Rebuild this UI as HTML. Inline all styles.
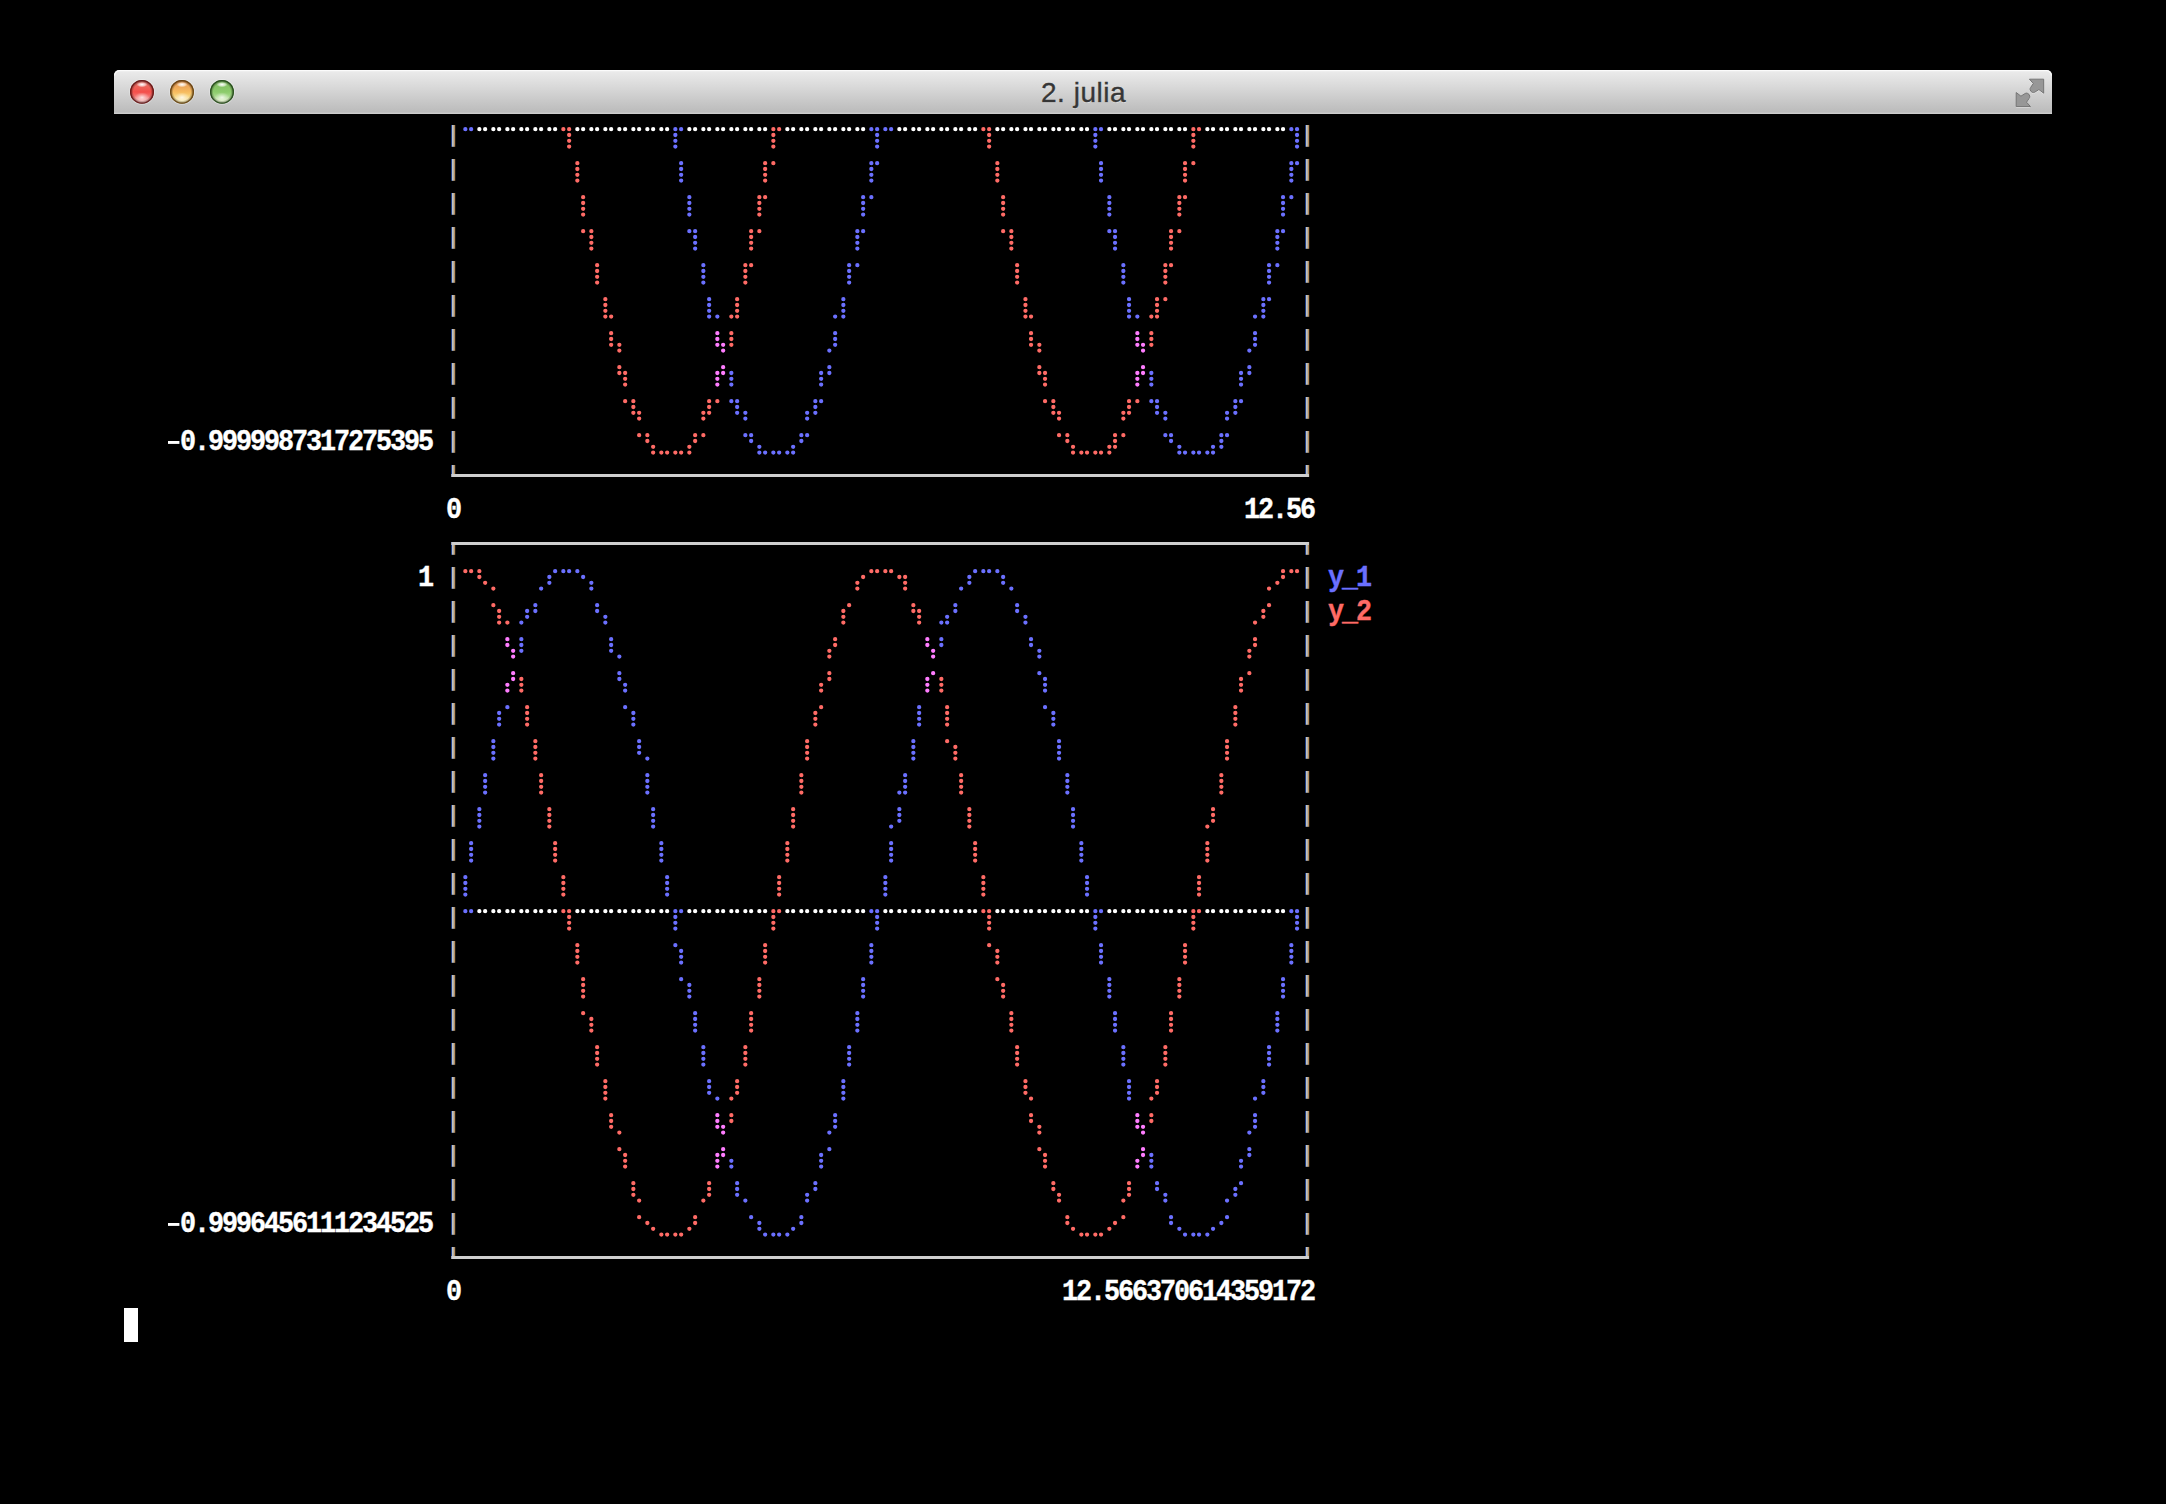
<!DOCTYPE html>
<html><head><meta charset="utf-8"><style>
html,body{margin:0;padding:0;background:#000;width:2166px;height:1504px;overflow:hidden}
svg{position:absolute;left:0;top:0}
.t{font-family:"Liberation Mono",monospace;font-weight:bold;font-size:26.800px;letter-spacing:-2.080px;white-space:pre}
</style></head><body>
<svg width="2166" height="1504" viewBox="0 0 2166 1504">
<defs>
<linearGradient id="tb" x1="0" y1="0" x2="0" y2="1">
<stop offset="0" stop-color="#ececec"/><stop offset="0.5" stop-color="#d3d3d3"/><stop offset="1" stop-color="#b9b9b9"/>
</linearGradient>
<radialGradient id="hl" cx="0.5" cy="0.5" r="0.5"><stop offset="0" stop-color="#fff" stop-opacity="1"/><stop offset="0.6" stop-color="#fff" stop-opacity="0.55"/><stop offset="1" stop-color="#fff" stop-opacity="0"/></radialGradient>
<linearGradient id="bred" x1="0" y1="0" x2="0" y2="1">
<stop offset="0" stop-color="#e27a72"/><stop offset="0.3" stop-color="#ee6259"/><stop offset="0.5" stop-color="#f44f4b"/><stop offset="0.68" stop-color="#f46f6c"/><stop offset="0.88" stop-color="#f4b2b2"/><stop offset="1" stop-color="#f0b4b4"/>
</linearGradient>
<linearGradient id="bora" x1="0" y1="0" x2="0" y2="1">
<stop offset="0" stop-color="#e89a58"/><stop offset="0.3" stop-color="#eea95a"/><stop offset="0.5" stop-color="#f7bb5e"/><stop offset="0.68" stop-color="#f8d47c"/><stop offset="0.88" stop-color="#fbedb8"/><stop offset="1" stop-color="#f3df9a"/>
</linearGradient>
<linearGradient id="bgrn" x1="0" y1="0" x2="0" y2="1">
<stop offset="0" stop-color="#8ac46c"/><stop offset="0.3" stop-color="#86c466"/><stop offset="0.5" stop-color="#8ccc6c"/><stop offset="0.68" stop-color="#a4d888"/><stop offset="0.88" stop-color="#dcefc4"/><stop offset="1" stop-color="#c6e2ac"/>
</linearGradient>
</defs>
<path d="M114 114V75a5 5 0 0 1 5-5H2047a5 5 0 0 1 5 5V114Z" fill="url(#tb)"/>
<path d="M114.6 75.6a5 5 0 0 1 5-5H2046.4a5 5 0 0 1 5 5" fill="none" stroke="#fbfbfb" stroke-width="1.1"/>
<rect x="114" y="112.6" width="1938" height="1.4" fill="#cdcdcd"/>
<defs>
<radialGradient id="vr" cx="0.5" cy="0.5" r="0.5"><stop offset="0" stop-color="#000" stop-opacity="0"/><stop offset="0.72" stop-color="#000" stop-opacity="0"/><stop offset="0.9" stop-color="#000" stop-opacity="0.35"/><stop offset="1" stop-color="#000" stop-opacity="0.6"/></radialGradient>
<radialGradient id="glow" cx="0.5" cy="0.5" r="0.5"><stop offset="0" stop-color="#fff" stop-opacity="0.75"/><stop offset="0.5" stop-color="#fff" stop-opacity="0.35"/><stop offset="1" stop-color="#fff" stop-opacity="0"/></radialGradient>
</defs>
<circle cx="142" cy="91.9" r="12.8" fill="#f4f6f6" fill-opacity="0.45"/>
<circle cx="142" cy="91.9" r="11.9" fill="url(#bred)"/>
<ellipse cx="142" cy="97.4" rx="7.5" ry="5" fill="url(#glow)"/>
<circle cx="142" cy="91.9" r="11.9" fill="url(#vr)"/>
<circle cx="142" cy="91.9" r="11.3" fill="none" stroke="#6a1010" stroke-width="1.3" stroke-opacity="0.75"/>
<ellipse cx="142" cy="84.6" rx="5.5" ry="2.6" fill="url(#hl)"/>
<circle cx="182" cy="91.9" r="12.8" fill="#f4f6f6" fill-opacity="0.45"/>
<circle cx="182" cy="91.9" r="11.9" fill="url(#bora)"/>
<ellipse cx="182" cy="97.4" rx="7.5" ry="5" fill="url(#glow)"/>
<circle cx="182" cy="91.9" r="11.9" fill="url(#vr)"/>
<circle cx="182" cy="91.9" r="11.3" fill="none" stroke="#6a4008" stroke-width="1.3" stroke-opacity="0.75"/>
<ellipse cx="182" cy="84.6" rx="5.5" ry="2.6" fill="url(#hl)"/>
<circle cx="222" cy="91.9" r="12.8" fill="#f4f6f6" fill-opacity="0.45"/>
<circle cx="222" cy="91.9" r="11.9" fill="url(#bgrn)"/>
<ellipse cx="222" cy="97.4" rx="7.5" ry="5" fill="url(#glow)"/>
<circle cx="222" cy="91.9" r="11.9" fill="url(#vr)"/>
<circle cx="222" cy="91.9" r="11.3" fill="none" stroke="#1e4a14" stroke-width="1.3" stroke-opacity="0.75"/>
<ellipse cx="222" cy="84.6" rx="5.5" ry="2.6" fill="url(#hl)"/>
<text x="1083.5" y="102.5" text-anchor="middle" font-family="Liberation Sans, sans-serif" font-size="28" letter-spacing="0.5" fill="#ffffff" fill-opacity="0.5">2. julia</text>
<text x="1083.5" y="101.5" text-anchor="middle" font-family="Liberation Sans, sans-serif" font-size="28" letter-spacing="0.5" fill="#363636" stroke="#363636" stroke-width="0.35">2. julia</text>
<g fill="#f4f4f4" fill-opacity="0.6" transform="translate(0 1.2)"><path d="M2029.42 79.17L2043.67 79.17L2043.67 93.19L2038.92 89.57L2034.62 92.29Q2033.6 92.8 2032.6 92.5Q2030.5 91.8 2030.1 89.6Q2029.9 88.4 2030.7 87.4L2033.27 83.47Z"/><path d="M2029.42 79.17L2043.67 79.17L2043.67 93.19L2038.92 89.57L2034.62 92.29Q2033.6 92.8 2032.6 92.5Q2030.5 91.8 2030.1 89.6Q2029.9 88.4 2030.7 87.4L2033.27 83.47Z" transform="rotate(180 2029.93 92.86)"/></g>
<g fill="#979797" stroke="#6e6e6e" stroke-width="0.9"><path d="M2029.42 79.17L2043.67 79.17L2043.67 93.19L2038.92 89.57L2034.62 92.29Q2033.6 92.8 2032.6 92.5Q2030.5 91.8 2030.1 89.6Q2029.9 88.4 2030.7 87.4L2033.27 83.47Z"/><path d="M2029.42 79.17L2043.67 79.17L2043.67 93.19L2038.92 89.57L2034.62 92.29Q2033.6 92.8 2032.6 92.5Q2030.5 91.8 2030.1 89.6Q2029.9 88.4 2030.7 87.4L2033.27 83.47Z" transform="rotate(180 2029.93 92.86)"/></g>
<path fill="#ffffff" d="M477.2 129.2a2.15 2.15 0 1 0 4.30 0a2.15 2.15 0 1 0 -4.30 0M483.0 129.2a2.15 2.15 0 1 0 4.30 0a2.15 2.15 0 1 0 -4.30 0M491.2 129.2a2.15 2.15 0 1 0 4.30 0a2.15 2.15 0 1 0 -4.30 0M497.0 129.2a2.15 2.15 0 1 0 4.30 0a2.15 2.15 0 1 0 -4.30 0M505.2 129.2a2.15 2.15 0 1 0 4.30 0a2.15 2.15 0 1 0 -4.30 0M511.0 129.2a2.15 2.15 0 1 0 4.30 0a2.15 2.15 0 1 0 -4.30 0M519.2 129.2a2.15 2.15 0 1 0 4.30 0a2.15 2.15 0 1 0 -4.30 0M525.0 129.2a2.15 2.15 0 1 0 4.30 0a2.15 2.15 0 1 0 -4.30 0M533.2 129.2a2.15 2.15 0 1 0 4.30 0a2.15 2.15 0 1 0 -4.30 0M539.0 129.2a2.15 2.15 0 1 0 4.30 0a2.15 2.15 0 1 0 -4.30 0M547.2 129.2a2.15 2.15 0 1 0 4.30 0a2.15 2.15 0 1 0 -4.30 0M553.0 129.2a2.15 2.15 0 1 0 4.30 0a2.15 2.15 0 1 0 -4.30 0M575.2 129.2a2.15 2.15 0 1 0 4.30 0a2.15 2.15 0 1 0 -4.30 0M581.0 129.2a2.15 2.15 0 1 0 4.30 0a2.15 2.15 0 1 0 -4.30 0M589.2 129.2a2.15 2.15 0 1 0 4.30 0a2.15 2.15 0 1 0 -4.30 0M595.0 129.2a2.15 2.15 0 1 0 4.30 0a2.15 2.15 0 1 0 -4.30 0M603.2 129.2a2.15 2.15 0 1 0 4.30 0a2.15 2.15 0 1 0 -4.30 0M609.0 129.2a2.15 2.15 0 1 0 4.30 0a2.15 2.15 0 1 0 -4.30 0M617.2 129.2a2.15 2.15 0 1 0 4.30 0a2.15 2.15 0 1 0 -4.30 0M623.0 129.2a2.15 2.15 0 1 0 4.30 0a2.15 2.15 0 1 0 -4.30 0M631.2 129.2a2.15 2.15 0 1 0 4.30 0a2.15 2.15 0 1 0 -4.30 0M637.0 129.2a2.15 2.15 0 1 0 4.30 0a2.15 2.15 0 1 0 -4.30 0M645.2 129.2a2.15 2.15 0 1 0 4.30 0a2.15 2.15 0 1 0 -4.30 0M651.0 129.2a2.15 2.15 0 1 0 4.30 0a2.15 2.15 0 1 0 -4.30 0M659.2 129.2a2.15 2.15 0 1 0 4.30 0a2.15 2.15 0 1 0 -4.30 0M665.0 129.2a2.15 2.15 0 1 0 4.30 0a2.15 2.15 0 1 0 -4.30 0M687.2 129.2a2.15 2.15 0 1 0 4.30 0a2.15 2.15 0 1 0 -4.30 0M693.0 129.2a2.15 2.15 0 1 0 4.30 0a2.15 2.15 0 1 0 -4.30 0M701.2 129.2a2.15 2.15 0 1 0 4.30 0a2.15 2.15 0 1 0 -4.30 0M707.0 129.2a2.15 2.15 0 1 0 4.30 0a2.15 2.15 0 1 0 -4.30 0M715.2 129.2a2.15 2.15 0 1 0 4.30 0a2.15 2.15 0 1 0 -4.30 0M721.0 129.2a2.15 2.15 0 1 0 4.30 0a2.15 2.15 0 1 0 -4.30 0M729.2 129.2a2.15 2.15 0 1 0 4.30 0a2.15 2.15 0 1 0 -4.30 0M735.0 129.2a2.15 2.15 0 1 0 4.30 0a2.15 2.15 0 1 0 -4.30 0M743.2 129.2a2.15 2.15 0 1 0 4.30 0a2.15 2.15 0 1 0 -4.30 0M749.0 129.2a2.15 2.15 0 1 0 4.30 0a2.15 2.15 0 1 0 -4.30 0M757.2 129.2a2.15 2.15 0 1 0 4.30 0a2.15 2.15 0 1 0 -4.30 0M763.0 129.2a2.15 2.15 0 1 0 4.30 0a2.15 2.15 0 1 0 -4.30 0M785.2 129.2a2.15 2.15 0 1 0 4.30 0a2.15 2.15 0 1 0 -4.30 0M791.0 129.2a2.15 2.15 0 1 0 4.30 0a2.15 2.15 0 1 0 -4.30 0M799.2 129.2a2.15 2.15 0 1 0 4.30 0a2.15 2.15 0 1 0 -4.30 0M805.0 129.2a2.15 2.15 0 1 0 4.30 0a2.15 2.15 0 1 0 -4.30 0M813.2 129.2a2.15 2.15 0 1 0 4.30 0a2.15 2.15 0 1 0 -4.30 0M819.0 129.2a2.15 2.15 0 1 0 4.30 0a2.15 2.15 0 1 0 -4.30 0M827.2 129.2a2.15 2.15 0 1 0 4.30 0a2.15 2.15 0 1 0 -4.30 0M833.0 129.2a2.15 2.15 0 1 0 4.30 0a2.15 2.15 0 1 0 -4.30 0M841.2 129.2a2.15 2.15 0 1 0 4.30 0a2.15 2.15 0 1 0 -4.30 0M847.0 129.2a2.15 2.15 0 1 0 4.30 0a2.15 2.15 0 1 0 -4.30 0M855.2 129.2a2.15 2.15 0 1 0 4.30 0a2.15 2.15 0 1 0 -4.30 0M861.0 129.2a2.15 2.15 0 1 0 4.30 0a2.15 2.15 0 1 0 -4.30 0M897.2 129.2a2.15 2.15 0 1 0 4.30 0a2.15 2.15 0 1 0 -4.30 0M903.0 129.2a2.15 2.15 0 1 0 4.30 0a2.15 2.15 0 1 0 -4.30 0M911.2 129.2a2.15 2.15 0 1 0 4.30 0a2.15 2.15 0 1 0 -4.30 0M917.0 129.2a2.15 2.15 0 1 0 4.30 0a2.15 2.15 0 1 0 -4.30 0M925.2 129.2a2.15 2.15 0 1 0 4.30 0a2.15 2.15 0 1 0 -4.30 0M931.0 129.2a2.15 2.15 0 1 0 4.30 0a2.15 2.15 0 1 0 -4.30 0M939.2 129.2a2.15 2.15 0 1 0 4.30 0a2.15 2.15 0 1 0 -4.30 0M945.0 129.2a2.15 2.15 0 1 0 4.30 0a2.15 2.15 0 1 0 -4.30 0M953.2 129.2a2.15 2.15 0 1 0 4.30 0a2.15 2.15 0 1 0 -4.30 0M959.0 129.2a2.15 2.15 0 1 0 4.30 0a2.15 2.15 0 1 0 -4.30 0M967.2 129.2a2.15 2.15 0 1 0 4.30 0a2.15 2.15 0 1 0 -4.30 0M973.0 129.2a2.15 2.15 0 1 0 4.30 0a2.15 2.15 0 1 0 -4.30 0M995.2 129.2a2.15 2.15 0 1 0 4.30 0a2.15 2.15 0 1 0 -4.30 0M1001.0 129.2a2.15 2.15 0 1 0 4.30 0a2.15 2.15 0 1 0 -4.30 0M1009.2 129.2a2.15 2.15 0 1 0 4.30 0a2.15 2.15 0 1 0 -4.30 0M1015.0 129.2a2.15 2.15 0 1 0 4.30 0a2.15 2.15 0 1 0 -4.30 0M1023.3 129.2a2.15 2.15 0 1 0 4.30 0a2.15 2.15 0 1 0 -4.30 0M1028.9 129.2a2.15 2.15 0 1 0 4.30 0a2.15 2.15 0 1 0 -4.30 0M1037.2 129.2a2.15 2.15 0 1 0 4.30 0a2.15 2.15 0 1 0 -4.30 0M1042.9 129.2a2.15 2.15 0 1 0 4.30 0a2.15 2.15 0 1 0 -4.30 0M1051.2 129.2a2.15 2.15 0 1 0 4.30 0a2.15 2.15 0 1 0 -4.30 0M1056.9 129.2a2.15 2.15 0 1 0 4.30 0a2.15 2.15 0 1 0 -4.30 0M1065.2 129.2a2.15 2.15 0 1 0 4.30 0a2.15 2.15 0 1 0 -4.30 0M1070.9 129.2a2.15 2.15 0 1 0 4.30 0a2.15 2.15 0 1 0 -4.30 0M1079.2 129.2a2.15 2.15 0 1 0 4.30 0a2.15 2.15 0 1 0 -4.30 0M1084.9 129.2a2.15 2.15 0 1 0 4.30 0a2.15 2.15 0 1 0 -4.30 0M1107.2 129.2a2.15 2.15 0 1 0 4.30 0a2.15 2.15 0 1 0 -4.30 0M1112.9 129.2a2.15 2.15 0 1 0 4.30 0a2.15 2.15 0 1 0 -4.30 0M1121.2 129.2a2.15 2.15 0 1 0 4.30 0a2.15 2.15 0 1 0 -4.30 0M1126.9 129.2a2.15 2.15 0 1 0 4.30 0a2.15 2.15 0 1 0 -4.30 0M1135.2 129.2a2.15 2.15 0 1 0 4.30 0a2.15 2.15 0 1 0 -4.30 0M1140.9 129.2a2.15 2.15 0 1 0 4.30 0a2.15 2.15 0 1 0 -4.30 0M1149.2 129.2a2.15 2.15 0 1 0 4.30 0a2.15 2.15 0 1 0 -4.30 0M1154.9 129.2a2.15 2.15 0 1 0 4.30 0a2.15 2.15 0 1 0 -4.30 0M1163.2 129.2a2.15 2.15 0 1 0 4.30 0a2.15 2.15 0 1 0 -4.30 0M1168.9 129.2a2.15 2.15 0 1 0 4.30 0a2.15 2.15 0 1 0 -4.30 0M1177.2 129.2a2.15 2.15 0 1 0 4.30 0a2.15 2.15 0 1 0 -4.30 0M1182.9 129.2a2.15 2.15 0 1 0 4.30 0a2.15 2.15 0 1 0 -4.30 0M1205.2 129.2a2.15 2.15 0 1 0 4.30 0a2.15 2.15 0 1 0 -4.30 0M1210.9 129.2a2.15 2.15 0 1 0 4.30 0a2.15 2.15 0 1 0 -4.30 0M1219.2 129.2a2.15 2.15 0 1 0 4.30 0a2.15 2.15 0 1 0 -4.30 0M1224.9 129.2a2.15 2.15 0 1 0 4.30 0a2.15 2.15 0 1 0 -4.30 0M1233.2 129.2a2.15 2.15 0 1 0 4.30 0a2.15 2.15 0 1 0 -4.30 0M1238.9 129.2a2.15 2.15 0 1 0 4.30 0a2.15 2.15 0 1 0 -4.30 0M1247.2 129.2a2.15 2.15 0 1 0 4.30 0a2.15 2.15 0 1 0 -4.30 0M1252.9 129.2a2.15 2.15 0 1 0 4.30 0a2.15 2.15 0 1 0 -4.30 0M1261.2 129.2a2.15 2.15 0 1 0 4.30 0a2.15 2.15 0 1 0 -4.30 0M1266.9 129.2a2.15 2.15 0 1 0 4.30 0a2.15 2.15 0 1 0 -4.30 0M1275.2 129.2a2.15 2.15 0 1 0 4.30 0a2.15 2.15 0 1 0 -4.30 0M1280.9 129.2a2.15 2.15 0 1 0 4.30 0a2.15 2.15 0 1 0 -4.30 0M477.2 911.2a2.15 2.15 0 1 0 4.30 0a2.15 2.15 0 1 0 -4.30 0M483.0 911.2a2.15 2.15 0 1 0 4.30 0a2.15 2.15 0 1 0 -4.30 0M491.2 911.2a2.15 2.15 0 1 0 4.30 0a2.15 2.15 0 1 0 -4.30 0M497.0 911.2a2.15 2.15 0 1 0 4.30 0a2.15 2.15 0 1 0 -4.30 0M505.2 911.2a2.15 2.15 0 1 0 4.30 0a2.15 2.15 0 1 0 -4.30 0M511.0 911.2a2.15 2.15 0 1 0 4.30 0a2.15 2.15 0 1 0 -4.30 0M519.2 911.2a2.15 2.15 0 1 0 4.30 0a2.15 2.15 0 1 0 -4.30 0M525.0 911.2a2.15 2.15 0 1 0 4.30 0a2.15 2.15 0 1 0 -4.30 0M533.2 911.2a2.15 2.15 0 1 0 4.30 0a2.15 2.15 0 1 0 -4.30 0M539.0 911.2a2.15 2.15 0 1 0 4.30 0a2.15 2.15 0 1 0 -4.30 0M547.2 911.2a2.15 2.15 0 1 0 4.30 0a2.15 2.15 0 1 0 -4.30 0M553.0 911.2a2.15 2.15 0 1 0 4.30 0a2.15 2.15 0 1 0 -4.30 0M575.2 911.2a2.15 2.15 0 1 0 4.30 0a2.15 2.15 0 1 0 -4.30 0M581.0 911.2a2.15 2.15 0 1 0 4.30 0a2.15 2.15 0 1 0 -4.30 0M589.2 911.2a2.15 2.15 0 1 0 4.30 0a2.15 2.15 0 1 0 -4.30 0M595.0 911.2a2.15 2.15 0 1 0 4.30 0a2.15 2.15 0 1 0 -4.30 0M603.2 911.2a2.15 2.15 0 1 0 4.30 0a2.15 2.15 0 1 0 -4.30 0M609.0 911.2a2.15 2.15 0 1 0 4.30 0a2.15 2.15 0 1 0 -4.30 0M617.2 911.2a2.15 2.15 0 1 0 4.30 0a2.15 2.15 0 1 0 -4.30 0M623.0 911.2a2.15 2.15 0 1 0 4.30 0a2.15 2.15 0 1 0 -4.30 0M631.2 911.2a2.15 2.15 0 1 0 4.30 0a2.15 2.15 0 1 0 -4.30 0M637.0 911.2a2.15 2.15 0 1 0 4.30 0a2.15 2.15 0 1 0 -4.30 0M645.2 911.2a2.15 2.15 0 1 0 4.30 0a2.15 2.15 0 1 0 -4.30 0M651.0 911.2a2.15 2.15 0 1 0 4.30 0a2.15 2.15 0 1 0 -4.30 0M659.2 911.2a2.15 2.15 0 1 0 4.30 0a2.15 2.15 0 1 0 -4.30 0M665.0 911.2a2.15 2.15 0 1 0 4.30 0a2.15 2.15 0 1 0 -4.30 0M687.2 911.2a2.15 2.15 0 1 0 4.30 0a2.15 2.15 0 1 0 -4.30 0M693.0 911.2a2.15 2.15 0 1 0 4.30 0a2.15 2.15 0 1 0 -4.30 0M701.2 911.2a2.15 2.15 0 1 0 4.30 0a2.15 2.15 0 1 0 -4.30 0M707.0 911.2a2.15 2.15 0 1 0 4.30 0a2.15 2.15 0 1 0 -4.30 0M715.2 911.2a2.15 2.15 0 1 0 4.30 0a2.15 2.15 0 1 0 -4.30 0M721.0 911.2a2.15 2.15 0 1 0 4.30 0a2.15 2.15 0 1 0 -4.30 0M729.2 911.2a2.15 2.15 0 1 0 4.30 0a2.15 2.15 0 1 0 -4.30 0M735.0 911.2a2.15 2.15 0 1 0 4.30 0a2.15 2.15 0 1 0 -4.30 0M743.2 911.2a2.15 2.15 0 1 0 4.30 0a2.15 2.15 0 1 0 -4.30 0M749.0 911.2a2.15 2.15 0 1 0 4.30 0a2.15 2.15 0 1 0 -4.30 0M757.2 911.2a2.15 2.15 0 1 0 4.30 0a2.15 2.15 0 1 0 -4.30 0M763.0 911.2a2.15 2.15 0 1 0 4.30 0a2.15 2.15 0 1 0 -4.30 0M785.2 911.2a2.15 2.15 0 1 0 4.30 0a2.15 2.15 0 1 0 -4.30 0M791.0 911.2a2.15 2.15 0 1 0 4.30 0a2.15 2.15 0 1 0 -4.30 0M799.2 911.2a2.15 2.15 0 1 0 4.30 0a2.15 2.15 0 1 0 -4.30 0M805.0 911.2a2.15 2.15 0 1 0 4.30 0a2.15 2.15 0 1 0 -4.30 0M813.2 911.2a2.15 2.15 0 1 0 4.30 0a2.15 2.15 0 1 0 -4.30 0M819.0 911.2a2.15 2.15 0 1 0 4.30 0a2.15 2.15 0 1 0 -4.30 0M827.2 911.2a2.15 2.15 0 1 0 4.30 0a2.15 2.15 0 1 0 -4.30 0M833.0 911.2a2.15 2.15 0 1 0 4.30 0a2.15 2.15 0 1 0 -4.30 0M841.2 911.2a2.15 2.15 0 1 0 4.30 0a2.15 2.15 0 1 0 -4.30 0M847.0 911.2a2.15 2.15 0 1 0 4.30 0a2.15 2.15 0 1 0 -4.30 0M855.2 911.2a2.15 2.15 0 1 0 4.30 0a2.15 2.15 0 1 0 -4.30 0M861.0 911.2a2.15 2.15 0 1 0 4.30 0a2.15 2.15 0 1 0 -4.30 0M883.2 911.2a2.15 2.15 0 1 0 4.30 0a2.15 2.15 0 1 0 -4.30 0M889.0 911.2a2.15 2.15 0 1 0 4.30 0a2.15 2.15 0 1 0 -4.30 0M897.2 911.2a2.15 2.15 0 1 0 4.30 0a2.15 2.15 0 1 0 -4.30 0M903.0 911.2a2.15 2.15 0 1 0 4.30 0a2.15 2.15 0 1 0 -4.30 0M911.2 911.2a2.15 2.15 0 1 0 4.30 0a2.15 2.15 0 1 0 -4.30 0M917.0 911.2a2.15 2.15 0 1 0 4.30 0a2.15 2.15 0 1 0 -4.30 0M925.2 911.2a2.15 2.15 0 1 0 4.30 0a2.15 2.15 0 1 0 -4.30 0M931.0 911.2a2.15 2.15 0 1 0 4.30 0a2.15 2.15 0 1 0 -4.30 0M939.2 911.2a2.15 2.15 0 1 0 4.30 0a2.15 2.15 0 1 0 -4.30 0M945.0 911.2a2.15 2.15 0 1 0 4.30 0a2.15 2.15 0 1 0 -4.30 0M953.2 911.2a2.15 2.15 0 1 0 4.30 0a2.15 2.15 0 1 0 -4.30 0M959.0 911.2a2.15 2.15 0 1 0 4.30 0a2.15 2.15 0 1 0 -4.30 0M967.2 911.2a2.15 2.15 0 1 0 4.30 0a2.15 2.15 0 1 0 -4.30 0M973.0 911.2a2.15 2.15 0 1 0 4.30 0a2.15 2.15 0 1 0 -4.30 0M995.2 911.2a2.15 2.15 0 1 0 4.30 0a2.15 2.15 0 1 0 -4.30 0M1001.0 911.2a2.15 2.15 0 1 0 4.30 0a2.15 2.15 0 1 0 -4.30 0M1009.2 911.2a2.15 2.15 0 1 0 4.30 0a2.15 2.15 0 1 0 -4.30 0M1015.0 911.2a2.15 2.15 0 1 0 4.30 0a2.15 2.15 0 1 0 -4.30 0M1023.3 911.2a2.15 2.15 0 1 0 4.30 0a2.15 2.15 0 1 0 -4.30 0M1028.9 911.2a2.15 2.15 0 1 0 4.30 0a2.15 2.15 0 1 0 -4.30 0M1037.2 911.2a2.15 2.15 0 1 0 4.30 0a2.15 2.15 0 1 0 -4.30 0M1042.9 911.2a2.15 2.15 0 1 0 4.30 0a2.15 2.15 0 1 0 -4.30 0M1051.2 911.2a2.15 2.15 0 1 0 4.30 0a2.15 2.15 0 1 0 -4.30 0M1056.9 911.2a2.15 2.15 0 1 0 4.30 0a2.15 2.15 0 1 0 -4.30 0M1065.2 911.2a2.15 2.15 0 1 0 4.30 0a2.15 2.15 0 1 0 -4.30 0M1070.9 911.2a2.15 2.15 0 1 0 4.30 0a2.15 2.15 0 1 0 -4.30 0M1079.2 911.2a2.15 2.15 0 1 0 4.30 0a2.15 2.15 0 1 0 -4.30 0M1084.9 911.2a2.15 2.15 0 1 0 4.30 0a2.15 2.15 0 1 0 -4.30 0M1107.2 911.2a2.15 2.15 0 1 0 4.30 0a2.15 2.15 0 1 0 -4.30 0M1112.9 911.2a2.15 2.15 0 1 0 4.30 0a2.15 2.15 0 1 0 -4.30 0M1121.2 911.2a2.15 2.15 0 1 0 4.30 0a2.15 2.15 0 1 0 -4.30 0M1126.9 911.2a2.15 2.15 0 1 0 4.30 0a2.15 2.15 0 1 0 -4.30 0M1135.2 911.2a2.15 2.15 0 1 0 4.30 0a2.15 2.15 0 1 0 -4.30 0M1140.9 911.2a2.15 2.15 0 1 0 4.30 0a2.15 2.15 0 1 0 -4.30 0M1149.2 911.2a2.15 2.15 0 1 0 4.30 0a2.15 2.15 0 1 0 -4.30 0M1154.9 911.2a2.15 2.15 0 1 0 4.30 0a2.15 2.15 0 1 0 -4.30 0M1163.2 911.2a2.15 2.15 0 1 0 4.30 0a2.15 2.15 0 1 0 -4.30 0M1168.9 911.2a2.15 2.15 0 1 0 4.30 0a2.15 2.15 0 1 0 -4.30 0M1177.2 911.2a2.15 2.15 0 1 0 4.30 0a2.15 2.15 0 1 0 -4.30 0M1182.9 911.2a2.15 2.15 0 1 0 4.30 0a2.15 2.15 0 1 0 -4.30 0M1205.2 911.2a2.15 2.15 0 1 0 4.30 0a2.15 2.15 0 1 0 -4.30 0M1210.9 911.2a2.15 2.15 0 1 0 4.30 0a2.15 2.15 0 1 0 -4.30 0M1219.2 911.2a2.15 2.15 0 1 0 4.30 0a2.15 2.15 0 1 0 -4.30 0M1224.9 911.2a2.15 2.15 0 1 0 4.30 0a2.15 2.15 0 1 0 -4.30 0M1233.2 911.2a2.15 2.15 0 1 0 4.30 0a2.15 2.15 0 1 0 -4.30 0M1238.9 911.2a2.15 2.15 0 1 0 4.30 0a2.15 2.15 0 1 0 -4.30 0M1247.2 911.2a2.15 2.15 0 1 0 4.30 0a2.15 2.15 0 1 0 -4.30 0M1252.9 911.2a2.15 2.15 0 1 0 4.30 0a2.15 2.15 0 1 0 -4.30 0M1261.2 911.2a2.15 2.15 0 1 0 4.30 0a2.15 2.15 0 1 0 -4.30 0M1266.9 911.2a2.15 2.15 0 1 0 4.30 0a2.15 2.15 0 1 0 -4.30 0M1275.2 911.2a2.15 2.15 0 1 0 4.30 0a2.15 2.15 0 1 0 -4.30 0M1280.9 911.2a2.15 2.15 0 1 0 4.30 0a2.15 2.15 0 1 0 -4.30 0"/>
<path fill="#ff6b66" d="M561.2 129.2a2.15 2.15 0 1 0 4.30 0a2.15 2.15 0 1 0 -4.30 0M567.0 129.2a2.15 2.15 0 1 0 4.30 0a2.15 2.15 0 1 0 -4.30 0M771.2 129.2a2.15 2.15 0 1 0 4.30 0a2.15 2.15 0 1 0 -4.30 0M777.0 129.2a2.15 2.15 0 1 0 4.30 0a2.15 2.15 0 1 0 -4.30 0M981.2 129.2a2.15 2.15 0 1 0 4.30 0a2.15 2.15 0 1 0 -4.30 0M987.0 129.2a2.15 2.15 0 1 0 4.30 0a2.15 2.15 0 1 0 -4.30 0M1191.2 129.2a2.15 2.15 0 1 0 4.30 0a2.15 2.15 0 1 0 -4.30 0M1196.9 129.2a2.15 2.15 0 1 0 4.30 0a2.15 2.15 0 1 0 -4.30 0M567.0 135.0a2.15 2.15 0 1 0 4.30 0a2.15 2.15 0 1 0 -4.30 0M771.2 135.0a2.15 2.15 0 1 0 4.30 0a2.15 2.15 0 1 0 -4.30 0M987.0 135.0a2.15 2.15 0 1 0 4.30 0a2.15 2.15 0 1 0 -4.30 0M1191.2 135.0a2.15 2.15 0 1 0 4.30 0a2.15 2.15 0 1 0 -4.30 0M567.0 140.8a2.15 2.15 0 1 0 4.30 0a2.15 2.15 0 1 0 -4.30 0M771.2 140.8a2.15 2.15 0 1 0 4.30 0a2.15 2.15 0 1 0 -4.30 0M987.0 140.8a2.15 2.15 0 1 0 4.30 0a2.15 2.15 0 1 0 -4.30 0M1191.2 140.8a2.15 2.15 0 1 0 4.30 0a2.15 2.15 0 1 0 -4.30 0M567.0 146.6a2.15 2.15 0 1 0 4.30 0a2.15 2.15 0 1 0 -4.30 0M771.2 146.6a2.15 2.15 0 1 0 4.30 0a2.15 2.15 0 1 0 -4.30 0M987.0 146.6a2.15 2.15 0 1 0 4.30 0a2.15 2.15 0 1 0 -4.30 0M1191.2 146.6a2.15 2.15 0 1 0 4.30 0a2.15 2.15 0 1 0 -4.30 0M575.2 163.2a2.15 2.15 0 1 0 4.30 0a2.15 2.15 0 1 0 -4.30 0M763.0 163.2a2.15 2.15 0 1 0 4.30 0a2.15 2.15 0 1 0 -4.30 0M771.2 163.2a2.15 2.15 0 1 0 4.30 0a2.15 2.15 0 1 0 -4.30 0M995.2 163.2a2.15 2.15 0 1 0 4.30 0a2.15 2.15 0 1 0 -4.30 0M1182.9 163.2a2.15 2.15 0 1 0 4.30 0a2.15 2.15 0 1 0 -4.30 0M1191.2 163.2a2.15 2.15 0 1 0 4.30 0a2.15 2.15 0 1 0 -4.30 0M575.2 169.0a2.15 2.15 0 1 0 4.30 0a2.15 2.15 0 1 0 -4.30 0M763.0 169.0a2.15 2.15 0 1 0 4.30 0a2.15 2.15 0 1 0 -4.30 0M995.2 169.0a2.15 2.15 0 1 0 4.30 0a2.15 2.15 0 1 0 -4.30 0M1182.9 169.0a2.15 2.15 0 1 0 4.30 0a2.15 2.15 0 1 0 -4.30 0M575.2 174.8a2.15 2.15 0 1 0 4.30 0a2.15 2.15 0 1 0 -4.30 0M763.0 174.8a2.15 2.15 0 1 0 4.30 0a2.15 2.15 0 1 0 -4.30 0M995.2 174.8a2.15 2.15 0 1 0 4.30 0a2.15 2.15 0 1 0 -4.30 0M1182.9 174.8a2.15 2.15 0 1 0 4.30 0a2.15 2.15 0 1 0 -4.30 0M575.2 180.6a2.15 2.15 0 1 0 4.30 0a2.15 2.15 0 1 0 -4.30 0M763.0 180.6a2.15 2.15 0 1 0 4.30 0a2.15 2.15 0 1 0 -4.30 0M995.2 180.6a2.15 2.15 0 1 0 4.30 0a2.15 2.15 0 1 0 -4.30 0M1182.9 180.6a2.15 2.15 0 1 0 4.30 0a2.15 2.15 0 1 0 -4.30 0M581.0 197.2a2.15 2.15 0 1 0 4.30 0a2.15 2.15 0 1 0 -4.30 0M757.2 197.2a2.15 2.15 0 1 0 4.30 0a2.15 2.15 0 1 0 -4.30 0M763.0 197.2a2.15 2.15 0 1 0 4.30 0a2.15 2.15 0 1 0 -4.30 0M1001.0 197.2a2.15 2.15 0 1 0 4.30 0a2.15 2.15 0 1 0 -4.30 0M1177.2 197.2a2.15 2.15 0 1 0 4.30 0a2.15 2.15 0 1 0 -4.30 0M1182.9 197.2a2.15 2.15 0 1 0 4.30 0a2.15 2.15 0 1 0 -4.30 0M581.0 203.0a2.15 2.15 0 1 0 4.30 0a2.15 2.15 0 1 0 -4.30 0M757.2 203.0a2.15 2.15 0 1 0 4.30 0a2.15 2.15 0 1 0 -4.30 0M1001.0 203.0a2.15 2.15 0 1 0 4.30 0a2.15 2.15 0 1 0 -4.30 0M1177.2 203.0a2.15 2.15 0 1 0 4.30 0a2.15 2.15 0 1 0 -4.30 0M581.0 208.8a2.15 2.15 0 1 0 4.30 0a2.15 2.15 0 1 0 -4.30 0M757.2 208.8a2.15 2.15 0 1 0 4.30 0a2.15 2.15 0 1 0 -4.30 0M1001.0 208.8a2.15 2.15 0 1 0 4.30 0a2.15 2.15 0 1 0 -4.30 0M1177.2 208.8a2.15 2.15 0 1 0 4.30 0a2.15 2.15 0 1 0 -4.30 0M581.0 214.6a2.15 2.15 0 1 0 4.30 0a2.15 2.15 0 1 0 -4.30 0M757.2 214.6a2.15 2.15 0 1 0 4.30 0a2.15 2.15 0 1 0 -4.30 0M1001.0 214.6a2.15 2.15 0 1 0 4.30 0a2.15 2.15 0 1 0 -4.30 0M1177.2 214.6a2.15 2.15 0 1 0 4.30 0a2.15 2.15 0 1 0 -4.30 0M581.0 231.2a2.15 2.15 0 1 0 4.30 0a2.15 2.15 0 1 0 -4.30 0M589.2 231.2a2.15 2.15 0 1 0 4.30 0a2.15 2.15 0 1 0 -4.30 0M749.0 231.2a2.15 2.15 0 1 0 4.30 0a2.15 2.15 0 1 0 -4.30 0M757.2 231.2a2.15 2.15 0 1 0 4.30 0a2.15 2.15 0 1 0 -4.30 0M1001.0 231.2a2.15 2.15 0 1 0 4.30 0a2.15 2.15 0 1 0 -4.30 0M1009.2 231.2a2.15 2.15 0 1 0 4.30 0a2.15 2.15 0 1 0 -4.30 0M1168.9 231.2a2.15 2.15 0 1 0 4.30 0a2.15 2.15 0 1 0 -4.30 0M1177.2 231.2a2.15 2.15 0 1 0 4.30 0a2.15 2.15 0 1 0 -4.30 0M589.2 237.0a2.15 2.15 0 1 0 4.30 0a2.15 2.15 0 1 0 -4.30 0M749.0 237.0a2.15 2.15 0 1 0 4.30 0a2.15 2.15 0 1 0 -4.30 0M1009.2 237.0a2.15 2.15 0 1 0 4.30 0a2.15 2.15 0 1 0 -4.30 0M1168.9 237.0a2.15 2.15 0 1 0 4.30 0a2.15 2.15 0 1 0 -4.30 0M589.2 242.8a2.15 2.15 0 1 0 4.30 0a2.15 2.15 0 1 0 -4.30 0M749.0 242.8a2.15 2.15 0 1 0 4.30 0a2.15 2.15 0 1 0 -4.30 0M1009.2 242.8a2.15 2.15 0 1 0 4.30 0a2.15 2.15 0 1 0 -4.30 0M1168.9 242.8a2.15 2.15 0 1 0 4.30 0a2.15 2.15 0 1 0 -4.30 0M589.2 248.6a2.15 2.15 0 1 0 4.30 0a2.15 2.15 0 1 0 -4.30 0M749.0 248.6a2.15 2.15 0 1 0 4.30 0a2.15 2.15 0 1 0 -4.30 0M1009.2 248.6a2.15 2.15 0 1 0 4.30 0a2.15 2.15 0 1 0 -4.30 0M1168.9 248.6a2.15 2.15 0 1 0 4.30 0a2.15 2.15 0 1 0 -4.30 0M595.0 265.2a2.15 2.15 0 1 0 4.30 0a2.15 2.15 0 1 0 -4.30 0M743.2 265.2a2.15 2.15 0 1 0 4.30 0a2.15 2.15 0 1 0 -4.30 0M749.0 265.2a2.15 2.15 0 1 0 4.30 0a2.15 2.15 0 1 0 -4.30 0M1015.0 265.2a2.15 2.15 0 1 0 4.30 0a2.15 2.15 0 1 0 -4.30 0M1163.2 265.2a2.15 2.15 0 1 0 4.30 0a2.15 2.15 0 1 0 -4.30 0M1168.9 265.2a2.15 2.15 0 1 0 4.30 0a2.15 2.15 0 1 0 -4.30 0M595.0 271.0a2.15 2.15 0 1 0 4.30 0a2.15 2.15 0 1 0 -4.30 0M743.2 271.0a2.15 2.15 0 1 0 4.30 0a2.15 2.15 0 1 0 -4.30 0M1015.0 271.0a2.15 2.15 0 1 0 4.30 0a2.15 2.15 0 1 0 -4.30 0M1163.2 271.0a2.15 2.15 0 1 0 4.30 0a2.15 2.15 0 1 0 -4.30 0M595.0 276.8a2.15 2.15 0 1 0 4.30 0a2.15 2.15 0 1 0 -4.30 0M743.2 276.8a2.15 2.15 0 1 0 4.30 0a2.15 2.15 0 1 0 -4.30 0M1015.0 276.8a2.15 2.15 0 1 0 4.30 0a2.15 2.15 0 1 0 -4.30 0M1163.2 276.8a2.15 2.15 0 1 0 4.30 0a2.15 2.15 0 1 0 -4.30 0M595.0 282.6a2.15 2.15 0 1 0 4.30 0a2.15 2.15 0 1 0 -4.30 0M743.2 282.6a2.15 2.15 0 1 0 4.30 0a2.15 2.15 0 1 0 -4.30 0M1015.0 282.6a2.15 2.15 0 1 0 4.30 0a2.15 2.15 0 1 0 -4.30 0M1163.2 282.6a2.15 2.15 0 1 0 4.30 0a2.15 2.15 0 1 0 -4.30 0M603.2 299.2a2.15 2.15 0 1 0 4.30 0a2.15 2.15 0 1 0 -4.30 0M735.0 299.2a2.15 2.15 0 1 0 4.30 0a2.15 2.15 0 1 0 -4.30 0M1023.3 299.2a2.15 2.15 0 1 0 4.30 0a2.15 2.15 0 1 0 -4.30 0M1154.9 299.2a2.15 2.15 0 1 0 4.30 0a2.15 2.15 0 1 0 -4.30 0M1163.2 299.2a2.15 2.15 0 1 0 4.30 0a2.15 2.15 0 1 0 -4.30 0M603.2 305.0a2.15 2.15 0 1 0 4.30 0a2.15 2.15 0 1 0 -4.30 0M735.0 305.0a2.15 2.15 0 1 0 4.30 0a2.15 2.15 0 1 0 -4.30 0M1023.3 305.0a2.15 2.15 0 1 0 4.30 0a2.15 2.15 0 1 0 -4.30 0M1154.9 305.0a2.15 2.15 0 1 0 4.30 0a2.15 2.15 0 1 0 -4.30 0M603.2 310.8a2.15 2.15 0 1 0 4.30 0a2.15 2.15 0 1 0 -4.30 0M735.0 310.8a2.15 2.15 0 1 0 4.30 0a2.15 2.15 0 1 0 -4.30 0M1023.3 310.8a2.15 2.15 0 1 0 4.30 0a2.15 2.15 0 1 0 -4.30 0M1154.9 310.8a2.15 2.15 0 1 0 4.30 0a2.15 2.15 0 1 0 -4.30 0M603.2 316.6a2.15 2.15 0 1 0 4.30 0a2.15 2.15 0 1 0 -4.30 0M609.0 316.6a2.15 2.15 0 1 0 4.30 0a2.15 2.15 0 1 0 -4.30 0M729.2 316.6a2.15 2.15 0 1 0 4.30 0a2.15 2.15 0 1 0 -4.30 0M735.0 316.6a2.15 2.15 0 1 0 4.30 0a2.15 2.15 0 1 0 -4.30 0M1023.3 316.6a2.15 2.15 0 1 0 4.30 0a2.15 2.15 0 1 0 -4.30 0M1028.9 316.6a2.15 2.15 0 1 0 4.30 0a2.15 2.15 0 1 0 -4.30 0M1149.2 316.6a2.15 2.15 0 1 0 4.30 0a2.15 2.15 0 1 0 -4.30 0M1154.9 316.6a2.15 2.15 0 1 0 4.30 0a2.15 2.15 0 1 0 -4.30 0M609.0 333.2a2.15 2.15 0 1 0 4.30 0a2.15 2.15 0 1 0 -4.30 0M729.2 333.2a2.15 2.15 0 1 0 4.30 0a2.15 2.15 0 1 0 -4.30 0M1028.9 333.2a2.15 2.15 0 1 0 4.30 0a2.15 2.15 0 1 0 -4.30 0M1149.2 333.2a2.15 2.15 0 1 0 4.30 0a2.15 2.15 0 1 0 -4.30 0M609.0 339.0a2.15 2.15 0 1 0 4.30 0a2.15 2.15 0 1 0 -4.30 0M729.2 339.0a2.15 2.15 0 1 0 4.30 0a2.15 2.15 0 1 0 -4.30 0M1028.9 339.0a2.15 2.15 0 1 0 4.30 0a2.15 2.15 0 1 0 -4.30 0M1149.2 339.0a2.15 2.15 0 1 0 4.30 0a2.15 2.15 0 1 0 -4.30 0M609.0 344.8a2.15 2.15 0 1 0 4.30 0a2.15 2.15 0 1 0 -4.30 0M617.2 344.8a2.15 2.15 0 1 0 4.30 0a2.15 2.15 0 1 0 -4.30 0M729.2 344.8a2.15 2.15 0 1 0 4.30 0a2.15 2.15 0 1 0 -4.30 0M1028.9 344.8a2.15 2.15 0 1 0 4.30 0a2.15 2.15 0 1 0 -4.30 0M1037.2 344.8a2.15 2.15 0 1 0 4.30 0a2.15 2.15 0 1 0 -4.30 0M1149.2 344.8a2.15 2.15 0 1 0 4.30 0a2.15 2.15 0 1 0 -4.30 0M617.2 350.6a2.15 2.15 0 1 0 4.30 0a2.15 2.15 0 1 0 -4.30 0M1037.2 350.6a2.15 2.15 0 1 0 4.30 0a2.15 2.15 0 1 0 -4.30 0M617.2 367.2a2.15 2.15 0 1 0 4.30 0a2.15 2.15 0 1 0 -4.30 0M1037.2 367.2a2.15 2.15 0 1 0 4.30 0a2.15 2.15 0 1 0 -4.30 0M617.2 373.0a2.15 2.15 0 1 0 4.30 0a2.15 2.15 0 1 0 -4.30 0M623.0 373.0a2.15 2.15 0 1 0 4.30 0a2.15 2.15 0 1 0 -4.30 0M1037.2 373.0a2.15 2.15 0 1 0 4.30 0a2.15 2.15 0 1 0 -4.30 0M1042.9 373.0a2.15 2.15 0 1 0 4.30 0a2.15 2.15 0 1 0 -4.30 0M623.0 378.8a2.15 2.15 0 1 0 4.30 0a2.15 2.15 0 1 0 -4.30 0M1042.9 378.8a2.15 2.15 0 1 0 4.30 0a2.15 2.15 0 1 0 -4.30 0M623.0 384.6a2.15 2.15 0 1 0 4.30 0a2.15 2.15 0 1 0 -4.30 0M1042.9 384.6a2.15 2.15 0 1 0 4.30 0a2.15 2.15 0 1 0 -4.30 0M623.0 401.2a2.15 2.15 0 1 0 4.30 0a2.15 2.15 0 1 0 -4.30 0M631.2 401.2a2.15 2.15 0 1 0 4.30 0a2.15 2.15 0 1 0 -4.30 0M707.0 401.2a2.15 2.15 0 1 0 4.30 0a2.15 2.15 0 1 0 -4.30 0M715.2 401.2a2.15 2.15 0 1 0 4.30 0a2.15 2.15 0 1 0 -4.30 0M1042.9 401.2a2.15 2.15 0 1 0 4.30 0a2.15 2.15 0 1 0 -4.30 0M1051.2 401.2a2.15 2.15 0 1 0 4.30 0a2.15 2.15 0 1 0 -4.30 0M1126.9 401.2a2.15 2.15 0 1 0 4.30 0a2.15 2.15 0 1 0 -4.30 0M1135.2 401.2a2.15 2.15 0 1 0 4.30 0a2.15 2.15 0 1 0 -4.30 0M631.2 407.0a2.15 2.15 0 1 0 4.30 0a2.15 2.15 0 1 0 -4.30 0M707.0 407.0a2.15 2.15 0 1 0 4.30 0a2.15 2.15 0 1 0 -4.30 0M1051.2 407.0a2.15 2.15 0 1 0 4.30 0a2.15 2.15 0 1 0 -4.30 0M1126.9 407.0a2.15 2.15 0 1 0 4.30 0a2.15 2.15 0 1 0 -4.30 0M631.2 412.8a2.15 2.15 0 1 0 4.30 0a2.15 2.15 0 1 0 -4.30 0M637.0 412.8a2.15 2.15 0 1 0 4.30 0a2.15 2.15 0 1 0 -4.30 0M701.2 412.8a2.15 2.15 0 1 0 4.30 0a2.15 2.15 0 1 0 -4.30 0M707.0 412.8a2.15 2.15 0 1 0 4.30 0a2.15 2.15 0 1 0 -4.30 0M1051.2 412.8a2.15 2.15 0 1 0 4.30 0a2.15 2.15 0 1 0 -4.30 0M1056.9 412.8a2.15 2.15 0 1 0 4.30 0a2.15 2.15 0 1 0 -4.30 0M1121.2 412.8a2.15 2.15 0 1 0 4.30 0a2.15 2.15 0 1 0 -4.30 0M1126.9 412.8a2.15 2.15 0 1 0 4.30 0a2.15 2.15 0 1 0 -4.30 0M637.0 418.6a2.15 2.15 0 1 0 4.30 0a2.15 2.15 0 1 0 -4.30 0M701.2 418.6a2.15 2.15 0 1 0 4.30 0a2.15 2.15 0 1 0 -4.30 0M1056.9 418.6a2.15 2.15 0 1 0 4.30 0a2.15 2.15 0 1 0 -4.30 0M1121.2 418.6a2.15 2.15 0 1 0 4.30 0a2.15 2.15 0 1 0 -4.30 0M637.0 435.2a2.15 2.15 0 1 0 4.30 0a2.15 2.15 0 1 0 -4.30 0M645.2 435.2a2.15 2.15 0 1 0 4.30 0a2.15 2.15 0 1 0 -4.30 0M693.0 435.2a2.15 2.15 0 1 0 4.30 0a2.15 2.15 0 1 0 -4.30 0M701.2 435.2a2.15 2.15 0 1 0 4.30 0a2.15 2.15 0 1 0 -4.30 0M1056.9 435.2a2.15 2.15 0 1 0 4.30 0a2.15 2.15 0 1 0 -4.30 0M1065.2 435.2a2.15 2.15 0 1 0 4.30 0a2.15 2.15 0 1 0 -4.30 0M1112.9 435.2a2.15 2.15 0 1 0 4.30 0a2.15 2.15 0 1 0 -4.30 0M1121.2 435.2a2.15 2.15 0 1 0 4.30 0a2.15 2.15 0 1 0 -4.30 0M645.2 441.0a2.15 2.15 0 1 0 4.30 0a2.15 2.15 0 1 0 -4.30 0M693.0 441.0a2.15 2.15 0 1 0 4.30 0a2.15 2.15 0 1 0 -4.30 0M1065.2 441.0a2.15 2.15 0 1 0 4.30 0a2.15 2.15 0 1 0 -4.30 0M1112.9 441.0a2.15 2.15 0 1 0 4.30 0a2.15 2.15 0 1 0 -4.30 0M651.0 446.8a2.15 2.15 0 1 0 4.30 0a2.15 2.15 0 1 0 -4.30 0M687.2 446.8a2.15 2.15 0 1 0 4.30 0a2.15 2.15 0 1 0 -4.30 0M1070.9 446.8a2.15 2.15 0 1 0 4.30 0a2.15 2.15 0 1 0 -4.30 0M1107.2 446.8a2.15 2.15 0 1 0 4.30 0a2.15 2.15 0 1 0 -4.30 0M1112.9 446.8a2.15 2.15 0 1 0 4.30 0a2.15 2.15 0 1 0 -4.30 0M651.0 452.6a2.15 2.15 0 1 0 4.30 0a2.15 2.15 0 1 0 -4.30 0M659.2 452.6a2.15 2.15 0 1 0 4.30 0a2.15 2.15 0 1 0 -4.30 0M665.0 452.6a2.15 2.15 0 1 0 4.30 0a2.15 2.15 0 1 0 -4.30 0M673.2 452.6a2.15 2.15 0 1 0 4.30 0a2.15 2.15 0 1 0 -4.30 0M679.0 452.6a2.15 2.15 0 1 0 4.30 0a2.15 2.15 0 1 0 -4.30 0M687.2 452.6a2.15 2.15 0 1 0 4.30 0a2.15 2.15 0 1 0 -4.30 0M1070.9 452.6a2.15 2.15 0 1 0 4.30 0a2.15 2.15 0 1 0 -4.30 0M1079.2 452.6a2.15 2.15 0 1 0 4.30 0a2.15 2.15 0 1 0 -4.30 0M1084.9 452.6a2.15 2.15 0 1 0 4.30 0a2.15 2.15 0 1 0 -4.30 0M1093.2 452.6a2.15 2.15 0 1 0 4.30 0a2.15 2.15 0 1 0 -4.30 0M1098.9 452.6a2.15 2.15 0 1 0 4.30 0a2.15 2.15 0 1 0 -4.30 0M1107.2 452.6a2.15 2.15 0 1 0 4.30 0a2.15 2.15 0 1 0 -4.30 0M463.2 571.2a2.15 2.15 0 1 0 4.30 0a2.15 2.15 0 1 0 -4.30 0M469.0 571.2a2.15 2.15 0 1 0 4.30 0a2.15 2.15 0 1 0 -4.30 0M477.2 571.2a2.15 2.15 0 1 0 4.30 0a2.15 2.15 0 1 0 -4.30 0M869.2 571.2a2.15 2.15 0 1 0 4.30 0a2.15 2.15 0 1 0 -4.30 0M875.0 571.2a2.15 2.15 0 1 0 4.30 0a2.15 2.15 0 1 0 -4.30 0M883.2 571.2a2.15 2.15 0 1 0 4.30 0a2.15 2.15 0 1 0 -4.30 0M889.0 571.2a2.15 2.15 0 1 0 4.30 0a2.15 2.15 0 1 0 -4.30 0M1280.9 571.2a2.15 2.15 0 1 0 4.30 0a2.15 2.15 0 1 0 -4.30 0M1289.2 571.2a2.15 2.15 0 1 0 4.30 0a2.15 2.15 0 1 0 -4.30 0M1294.9 571.2a2.15 2.15 0 1 0 4.30 0a2.15 2.15 0 1 0 -4.30 0M477.2 577.0a2.15 2.15 0 1 0 4.30 0a2.15 2.15 0 1 0 -4.30 0M861.0 577.0a2.15 2.15 0 1 0 4.30 0a2.15 2.15 0 1 0 -4.30 0M897.2 577.0a2.15 2.15 0 1 0 4.30 0a2.15 2.15 0 1 0 -4.30 0M903.0 577.0a2.15 2.15 0 1 0 4.30 0a2.15 2.15 0 1 0 -4.30 0M1280.9 577.0a2.15 2.15 0 1 0 4.30 0a2.15 2.15 0 1 0 -4.30 0M483.0 582.8a2.15 2.15 0 1 0 4.30 0a2.15 2.15 0 1 0 -4.30 0M855.2 582.8a2.15 2.15 0 1 0 4.30 0a2.15 2.15 0 1 0 -4.30 0M903.0 582.8a2.15 2.15 0 1 0 4.30 0a2.15 2.15 0 1 0 -4.30 0M1275.2 582.8a2.15 2.15 0 1 0 4.30 0a2.15 2.15 0 1 0 -4.30 0M491.2 588.6a2.15 2.15 0 1 0 4.30 0a2.15 2.15 0 1 0 -4.30 0M855.2 588.6a2.15 2.15 0 1 0 4.30 0a2.15 2.15 0 1 0 -4.30 0M903.0 588.6a2.15 2.15 0 1 0 4.30 0a2.15 2.15 0 1 0 -4.30 0M1266.9 588.6a2.15 2.15 0 1 0 4.30 0a2.15 2.15 0 1 0 -4.30 0M491.2 605.2a2.15 2.15 0 1 0 4.30 0a2.15 2.15 0 1 0 -4.30 0M847.0 605.2a2.15 2.15 0 1 0 4.30 0a2.15 2.15 0 1 0 -4.30 0M911.2 605.2a2.15 2.15 0 1 0 4.30 0a2.15 2.15 0 1 0 -4.30 0M1266.9 605.2a2.15 2.15 0 1 0 4.30 0a2.15 2.15 0 1 0 -4.30 0M497.0 611.0a2.15 2.15 0 1 0 4.30 0a2.15 2.15 0 1 0 -4.30 0M841.2 611.0a2.15 2.15 0 1 0 4.30 0a2.15 2.15 0 1 0 -4.30 0M911.2 611.0a2.15 2.15 0 1 0 4.30 0a2.15 2.15 0 1 0 -4.30 0M917.0 611.0a2.15 2.15 0 1 0 4.30 0a2.15 2.15 0 1 0 -4.30 0M1261.2 611.0a2.15 2.15 0 1 0 4.30 0a2.15 2.15 0 1 0 -4.30 0M497.0 616.8a2.15 2.15 0 1 0 4.30 0a2.15 2.15 0 1 0 -4.30 0M841.2 616.8a2.15 2.15 0 1 0 4.30 0a2.15 2.15 0 1 0 -4.30 0M917.0 616.8a2.15 2.15 0 1 0 4.30 0a2.15 2.15 0 1 0 -4.30 0M1261.2 616.8a2.15 2.15 0 1 0 4.30 0a2.15 2.15 0 1 0 -4.30 0M497.0 622.6a2.15 2.15 0 1 0 4.30 0a2.15 2.15 0 1 0 -4.30 0M505.2 622.6a2.15 2.15 0 1 0 4.30 0a2.15 2.15 0 1 0 -4.30 0M841.2 622.6a2.15 2.15 0 1 0 4.30 0a2.15 2.15 0 1 0 -4.30 0M917.0 622.6a2.15 2.15 0 1 0 4.30 0a2.15 2.15 0 1 0 -4.30 0M1252.9 622.6a2.15 2.15 0 1 0 4.30 0a2.15 2.15 0 1 0 -4.30 0M833.0 639.2a2.15 2.15 0 1 0 4.30 0a2.15 2.15 0 1 0 -4.30 0M1252.9 639.2a2.15 2.15 0 1 0 4.30 0a2.15 2.15 0 1 0 -4.30 0M833.0 645.0a2.15 2.15 0 1 0 4.30 0a2.15 2.15 0 1 0 -4.30 0M1252.9 645.0a2.15 2.15 0 1 0 4.30 0a2.15 2.15 0 1 0 -4.30 0M827.2 650.8a2.15 2.15 0 1 0 4.30 0a2.15 2.15 0 1 0 -4.30 0M1247.2 650.8a2.15 2.15 0 1 0 4.30 0a2.15 2.15 0 1 0 -4.30 0M827.2 656.6a2.15 2.15 0 1 0 4.30 0a2.15 2.15 0 1 0 -4.30 0M1247.2 656.6a2.15 2.15 0 1 0 4.30 0a2.15 2.15 0 1 0 -4.30 0M827.2 673.2a2.15 2.15 0 1 0 4.30 0a2.15 2.15 0 1 0 -4.30 0M1247.2 673.2a2.15 2.15 0 1 0 4.30 0a2.15 2.15 0 1 0 -4.30 0M519.2 679.0a2.15 2.15 0 1 0 4.30 0a2.15 2.15 0 1 0 -4.30 0M827.2 679.0a2.15 2.15 0 1 0 4.30 0a2.15 2.15 0 1 0 -4.30 0M939.2 679.0a2.15 2.15 0 1 0 4.30 0a2.15 2.15 0 1 0 -4.30 0M1238.9 679.0a2.15 2.15 0 1 0 4.30 0a2.15 2.15 0 1 0 -4.30 0M519.2 684.8a2.15 2.15 0 1 0 4.30 0a2.15 2.15 0 1 0 -4.30 0M819.0 684.8a2.15 2.15 0 1 0 4.30 0a2.15 2.15 0 1 0 -4.30 0M939.2 684.8a2.15 2.15 0 1 0 4.30 0a2.15 2.15 0 1 0 -4.30 0M1238.9 684.8a2.15 2.15 0 1 0 4.30 0a2.15 2.15 0 1 0 -4.30 0M519.2 690.6a2.15 2.15 0 1 0 4.30 0a2.15 2.15 0 1 0 -4.30 0M819.0 690.6a2.15 2.15 0 1 0 4.30 0a2.15 2.15 0 1 0 -4.30 0M939.2 690.6a2.15 2.15 0 1 0 4.30 0a2.15 2.15 0 1 0 -4.30 0M1238.9 690.6a2.15 2.15 0 1 0 4.30 0a2.15 2.15 0 1 0 -4.30 0M525.0 707.2a2.15 2.15 0 1 0 4.30 0a2.15 2.15 0 1 0 -4.30 0M819.0 707.2a2.15 2.15 0 1 0 4.30 0a2.15 2.15 0 1 0 -4.30 0M945.0 707.2a2.15 2.15 0 1 0 4.30 0a2.15 2.15 0 1 0 -4.30 0M1233.2 707.2a2.15 2.15 0 1 0 4.30 0a2.15 2.15 0 1 0 -4.30 0M525.0 713.0a2.15 2.15 0 1 0 4.30 0a2.15 2.15 0 1 0 -4.30 0M813.2 713.0a2.15 2.15 0 1 0 4.30 0a2.15 2.15 0 1 0 -4.30 0M945.0 713.0a2.15 2.15 0 1 0 4.30 0a2.15 2.15 0 1 0 -4.30 0M1233.2 713.0a2.15 2.15 0 1 0 4.30 0a2.15 2.15 0 1 0 -4.30 0M525.0 718.8a2.15 2.15 0 1 0 4.30 0a2.15 2.15 0 1 0 -4.30 0M813.2 718.8a2.15 2.15 0 1 0 4.30 0a2.15 2.15 0 1 0 -4.30 0M945.0 718.8a2.15 2.15 0 1 0 4.30 0a2.15 2.15 0 1 0 -4.30 0M1233.2 718.8a2.15 2.15 0 1 0 4.30 0a2.15 2.15 0 1 0 -4.30 0M525.0 724.6a2.15 2.15 0 1 0 4.30 0a2.15 2.15 0 1 0 -4.30 0M813.2 724.6a2.15 2.15 0 1 0 4.30 0a2.15 2.15 0 1 0 -4.30 0M945.0 724.6a2.15 2.15 0 1 0 4.30 0a2.15 2.15 0 1 0 -4.30 0M1233.2 724.6a2.15 2.15 0 1 0 4.30 0a2.15 2.15 0 1 0 -4.30 0M533.2 741.2a2.15 2.15 0 1 0 4.30 0a2.15 2.15 0 1 0 -4.30 0M805.0 741.2a2.15 2.15 0 1 0 4.30 0a2.15 2.15 0 1 0 -4.30 0M945.0 741.2a2.15 2.15 0 1 0 4.30 0a2.15 2.15 0 1 0 -4.30 0M1224.9 741.2a2.15 2.15 0 1 0 4.30 0a2.15 2.15 0 1 0 -4.30 0M533.2 747.0a2.15 2.15 0 1 0 4.30 0a2.15 2.15 0 1 0 -4.30 0M805.0 747.0a2.15 2.15 0 1 0 4.30 0a2.15 2.15 0 1 0 -4.30 0M953.2 747.0a2.15 2.15 0 1 0 4.30 0a2.15 2.15 0 1 0 -4.30 0M1224.9 747.0a2.15 2.15 0 1 0 4.30 0a2.15 2.15 0 1 0 -4.30 0M533.2 752.8a2.15 2.15 0 1 0 4.30 0a2.15 2.15 0 1 0 -4.30 0M805.0 752.8a2.15 2.15 0 1 0 4.30 0a2.15 2.15 0 1 0 -4.30 0M953.2 752.8a2.15 2.15 0 1 0 4.30 0a2.15 2.15 0 1 0 -4.30 0M1224.9 752.8a2.15 2.15 0 1 0 4.30 0a2.15 2.15 0 1 0 -4.30 0M533.2 758.6a2.15 2.15 0 1 0 4.30 0a2.15 2.15 0 1 0 -4.30 0M805.0 758.6a2.15 2.15 0 1 0 4.30 0a2.15 2.15 0 1 0 -4.30 0M953.2 758.6a2.15 2.15 0 1 0 4.30 0a2.15 2.15 0 1 0 -4.30 0M1224.9 758.6a2.15 2.15 0 1 0 4.30 0a2.15 2.15 0 1 0 -4.30 0M539.0 775.2a2.15 2.15 0 1 0 4.30 0a2.15 2.15 0 1 0 -4.30 0M799.2 775.2a2.15 2.15 0 1 0 4.30 0a2.15 2.15 0 1 0 -4.30 0M959.0 775.2a2.15 2.15 0 1 0 4.30 0a2.15 2.15 0 1 0 -4.30 0M1219.2 775.2a2.15 2.15 0 1 0 4.30 0a2.15 2.15 0 1 0 -4.30 0M539.0 781.0a2.15 2.15 0 1 0 4.30 0a2.15 2.15 0 1 0 -4.30 0M799.2 781.0a2.15 2.15 0 1 0 4.30 0a2.15 2.15 0 1 0 -4.30 0M959.0 781.0a2.15 2.15 0 1 0 4.30 0a2.15 2.15 0 1 0 -4.30 0M1219.2 781.0a2.15 2.15 0 1 0 4.30 0a2.15 2.15 0 1 0 -4.30 0M539.0 786.8a2.15 2.15 0 1 0 4.30 0a2.15 2.15 0 1 0 -4.30 0M799.2 786.8a2.15 2.15 0 1 0 4.30 0a2.15 2.15 0 1 0 -4.30 0M959.0 786.8a2.15 2.15 0 1 0 4.30 0a2.15 2.15 0 1 0 -4.30 0M1219.2 786.8a2.15 2.15 0 1 0 4.30 0a2.15 2.15 0 1 0 -4.30 0M539.0 792.6a2.15 2.15 0 1 0 4.30 0a2.15 2.15 0 1 0 -4.30 0M799.2 792.6a2.15 2.15 0 1 0 4.30 0a2.15 2.15 0 1 0 -4.30 0M959.0 792.6a2.15 2.15 0 1 0 4.30 0a2.15 2.15 0 1 0 -4.30 0M1219.2 792.6a2.15 2.15 0 1 0 4.30 0a2.15 2.15 0 1 0 -4.30 0M547.2 809.2a2.15 2.15 0 1 0 4.30 0a2.15 2.15 0 1 0 -4.30 0M791.0 809.2a2.15 2.15 0 1 0 4.30 0a2.15 2.15 0 1 0 -4.30 0M967.2 809.2a2.15 2.15 0 1 0 4.30 0a2.15 2.15 0 1 0 -4.30 0M1210.9 809.2a2.15 2.15 0 1 0 4.30 0a2.15 2.15 0 1 0 -4.30 0M547.2 815.0a2.15 2.15 0 1 0 4.30 0a2.15 2.15 0 1 0 -4.30 0M791.0 815.0a2.15 2.15 0 1 0 4.30 0a2.15 2.15 0 1 0 -4.30 0M967.2 815.0a2.15 2.15 0 1 0 4.30 0a2.15 2.15 0 1 0 -4.30 0M1210.9 815.0a2.15 2.15 0 1 0 4.30 0a2.15 2.15 0 1 0 -4.30 0M547.2 820.8a2.15 2.15 0 1 0 4.30 0a2.15 2.15 0 1 0 -4.30 0M791.0 820.8a2.15 2.15 0 1 0 4.30 0a2.15 2.15 0 1 0 -4.30 0M967.2 820.8a2.15 2.15 0 1 0 4.30 0a2.15 2.15 0 1 0 -4.30 0M1210.9 820.8a2.15 2.15 0 1 0 4.30 0a2.15 2.15 0 1 0 -4.30 0M547.2 826.6a2.15 2.15 0 1 0 4.30 0a2.15 2.15 0 1 0 -4.30 0M791.0 826.6a2.15 2.15 0 1 0 4.30 0a2.15 2.15 0 1 0 -4.30 0M967.2 826.6a2.15 2.15 0 1 0 4.30 0a2.15 2.15 0 1 0 -4.30 0M1205.2 826.6a2.15 2.15 0 1 0 4.30 0a2.15 2.15 0 1 0 -4.30 0M553.0 843.2a2.15 2.15 0 1 0 4.30 0a2.15 2.15 0 1 0 -4.30 0M785.2 843.2a2.15 2.15 0 1 0 4.30 0a2.15 2.15 0 1 0 -4.30 0M973.0 843.2a2.15 2.15 0 1 0 4.30 0a2.15 2.15 0 1 0 -4.30 0M1205.2 843.2a2.15 2.15 0 1 0 4.30 0a2.15 2.15 0 1 0 -4.30 0M553.0 849.0a2.15 2.15 0 1 0 4.30 0a2.15 2.15 0 1 0 -4.30 0M785.2 849.0a2.15 2.15 0 1 0 4.30 0a2.15 2.15 0 1 0 -4.30 0M973.0 849.0a2.15 2.15 0 1 0 4.30 0a2.15 2.15 0 1 0 -4.30 0M1205.2 849.0a2.15 2.15 0 1 0 4.30 0a2.15 2.15 0 1 0 -4.30 0M553.0 854.8a2.15 2.15 0 1 0 4.30 0a2.15 2.15 0 1 0 -4.30 0M785.2 854.8a2.15 2.15 0 1 0 4.30 0a2.15 2.15 0 1 0 -4.30 0M973.0 854.8a2.15 2.15 0 1 0 4.30 0a2.15 2.15 0 1 0 -4.30 0M1205.2 854.8a2.15 2.15 0 1 0 4.30 0a2.15 2.15 0 1 0 -4.30 0M553.0 860.6a2.15 2.15 0 1 0 4.30 0a2.15 2.15 0 1 0 -4.30 0M785.2 860.6a2.15 2.15 0 1 0 4.30 0a2.15 2.15 0 1 0 -4.30 0M973.0 860.6a2.15 2.15 0 1 0 4.30 0a2.15 2.15 0 1 0 -4.30 0M1205.2 860.6a2.15 2.15 0 1 0 4.30 0a2.15 2.15 0 1 0 -4.30 0M561.2 877.2a2.15 2.15 0 1 0 4.30 0a2.15 2.15 0 1 0 -4.30 0M777.0 877.2a2.15 2.15 0 1 0 4.30 0a2.15 2.15 0 1 0 -4.30 0M981.2 877.2a2.15 2.15 0 1 0 4.30 0a2.15 2.15 0 1 0 -4.30 0M1196.9 877.2a2.15 2.15 0 1 0 4.30 0a2.15 2.15 0 1 0 -4.30 0M561.2 883.0a2.15 2.15 0 1 0 4.30 0a2.15 2.15 0 1 0 -4.30 0M777.0 883.0a2.15 2.15 0 1 0 4.30 0a2.15 2.15 0 1 0 -4.30 0M981.2 883.0a2.15 2.15 0 1 0 4.30 0a2.15 2.15 0 1 0 -4.30 0M1196.9 883.0a2.15 2.15 0 1 0 4.30 0a2.15 2.15 0 1 0 -4.30 0M561.2 888.8a2.15 2.15 0 1 0 4.30 0a2.15 2.15 0 1 0 -4.30 0M777.0 888.8a2.15 2.15 0 1 0 4.30 0a2.15 2.15 0 1 0 -4.30 0M981.2 888.8a2.15 2.15 0 1 0 4.30 0a2.15 2.15 0 1 0 -4.30 0M1196.9 888.8a2.15 2.15 0 1 0 4.30 0a2.15 2.15 0 1 0 -4.30 0M561.2 894.6a2.15 2.15 0 1 0 4.30 0a2.15 2.15 0 1 0 -4.30 0M777.0 894.6a2.15 2.15 0 1 0 4.30 0a2.15 2.15 0 1 0 -4.30 0M981.2 894.6a2.15 2.15 0 1 0 4.30 0a2.15 2.15 0 1 0 -4.30 0M1196.9 894.6a2.15 2.15 0 1 0 4.30 0a2.15 2.15 0 1 0 -4.30 0M561.2 911.2a2.15 2.15 0 1 0 4.30 0a2.15 2.15 0 1 0 -4.30 0M567.0 911.2a2.15 2.15 0 1 0 4.30 0a2.15 2.15 0 1 0 -4.30 0M771.2 911.2a2.15 2.15 0 1 0 4.30 0a2.15 2.15 0 1 0 -4.30 0M777.0 911.2a2.15 2.15 0 1 0 4.30 0a2.15 2.15 0 1 0 -4.30 0M981.2 911.2a2.15 2.15 0 1 0 4.30 0a2.15 2.15 0 1 0 -4.30 0M987.0 911.2a2.15 2.15 0 1 0 4.30 0a2.15 2.15 0 1 0 -4.30 0M1191.2 911.2a2.15 2.15 0 1 0 4.30 0a2.15 2.15 0 1 0 -4.30 0M1196.9 911.2a2.15 2.15 0 1 0 4.30 0a2.15 2.15 0 1 0 -4.30 0M567.0 917.0a2.15 2.15 0 1 0 4.30 0a2.15 2.15 0 1 0 -4.30 0M771.2 917.0a2.15 2.15 0 1 0 4.30 0a2.15 2.15 0 1 0 -4.30 0M987.0 917.0a2.15 2.15 0 1 0 4.30 0a2.15 2.15 0 1 0 -4.30 0M1191.2 917.0a2.15 2.15 0 1 0 4.30 0a2.15 2.15 0 1 0 -4.30 0M567.0 922.8a2.15 2.15 0 1 0 4.30 0a2.15 2.15 0 1 0 -4.30 0M771.2 922.8a2.15 2.15 0 1 0 4.30 0a2.15 2.15 0 1 0 -4.30 0M987.0 922.8a2.15 2.15 0 1 0 4.30 0a2.15 2.15 0 1 0 -4.30 0M1191.2 922.8a2.15 2.15 0 1 0 4.30 0a2.15 2.15 0 1 0 -4.30 0M567.0 928.6a2.15 2.15 0 1 0 4.30 0a2.15 2.15 0 1 0 -4.30 0M771.2 928.6a2.15 2.15 0 1 0 4.30 0a2.15 2.15 0 1 0 -4.30 0M987.0 928.6a2.15 2.15 0 1 0 4.30 0a2.15 2.15 0 1 0 -4.30 0M1191.2 928.6a2.15 2.15 0 1 0 4.30 0a2.15 2.15 0 1 0 -4.30 0M575.2 945.2a2.15 2.15 0 1 0 4.30 0a2.15 2.15 0 1 0 -4.30 0M763.0 945.2a2.15 2.15 0 1 0 4.30 0a2.15 2.15 0 1 0 -4.30 0M987.0 945.2a2.15 2.15 0 1 0 4.30 0a2.15 2.15 0 1 0 -4.30 0M1182.9 945.2a2.15 2.15 0 1 0 4.30 0a2.15 2.15 0 1 0 -4.30 0M575.2 951.0a2.15 2.15 0 1 0 4.30 0a2.15 2.15 0 1 0 -4.30 0M763.0 951.0a2.15 2.15 0 1 0 4.30 0a2.15 2.15 0 1 0 -4.30 0M995.2 951.0a2.15 2.15 0 1 0 4.30 0a2.15 2.15 0 1 0 -4.30 0M1182.9 951.0a2.15 2.15 0 1 0 4.30 0a2.15 2.15 0 1 0 -4.30 0M575.2 956.8a2.15 2.15 0 1 0 4.30 0a2.15 2.15 0 1 0 -4.30 0M763.0 956.8a2.15 2.15 0 1 0 4.30 0a2.15 2.15 0 1 0 -4.30 0M995.2 956.8a2.15 2.15 0 1 0 4.30 0a2.15 2.15 0 1 0 -4.30 0M1182.9 956.8a2.15 2.15 0 1 0 4.30 0a2.15 2.15 0 1 0 -4.30 0M575.2 962.6a2.15 2.15 0 1 0 4.30 0a2.15 2.15 0 1 0 -4.30 0M763.0 962.6a2.15 2.15 0 1 0 4.30 0a2.15 2.15 0 1 0 -4.30 0M995.2 962.6a2.15 2.15 0 1 0 4.30 0a2.15 2.15 0 1 0 -4.30 0M1182.9 962.6a2.15 2.15 0 1 0 4.30 0a2.15 2.15 0 1 0 -4.30 0M581.0 979.2a2.15 2.15 0 1 0 4.30 0a2.15 2.15 0 1 0 -4.30 0M757.2 979.2a2.15 2.15 0 1 0 4.30 0a2.15 2.15 0 1 0 -4.30 0M995.2 979.2a2.15 2.15 0 1 0 4.30 0a2.15 2.15 0 1 0 -4.30 0M1177.2 979.2a2.15 2.15 0 1 0 4.30 0a2.15 2.15 0 1 0 -4.30 0M581.0 985.0a2.15 2.15 0 1 0 4.30 0a2.15 2.15 0 1 0 -4.30 0M757.2 985.0a2.15 2.15 0 1 0 4.30 0a2.15 2.15 0 1 0 -4.30 0M1001.0 985.0a2.15 2.15 0 1 0 4.30 0a2.15 2.15 0 1 0 -4.30 0M1177.2 985.0a2.15 2.15 0 1 0 4.30 0a2.15 2.15 0 1 0 -4.30 0M581.0 990.8a2.15 2.15 0 1 0 4.30 0a2.15 2.15 0 1 0 -4.30 0M757.2 990.8a2.15 2.15 0 1 0 4.30 0a2.15 2.15 0 1 0 -4.30 0M1001.0 990.8a2.15 2.15 0 1 0 4.30 0a2.15 2.15 0 1 0 -4.30 0M1177.2 990.8a2.15 2.15 0 1 0 4.30 0a2.15 2.15 0 1 0 -4.30 0M581.0 996.6a2.15 2.15 0 1 0 4.30 0a2.15 2.15 0 1 0 -4.30 0M757.2 996.6a2.15 2.15 0 1 0 4.30 0a2.15 2.15 0 1 0 -4.30 0M1001.0 996.6a2.15 2.15 0 1 0 4.30 0a2.15 2.15 0 1 0 -4.30 0M1177.2 996.6a2.15 2.15 0 1 0 4.30 0a2.15 2.15 0 1 0 -4.30 0M581.0 1013.2a2.15 2.15 0 1 0 4.30 0a2.15 2.15 0 1 0 -4.30 0M749.0 1013.2a2.15 2.15 0 1 0 4.30 0a2.15 2.15 0 1 0 -4.30 0M1009.2 1013.2a2.15 2.15 0 1 0 4.30 0a2.15 2.15 0 1 0 -4.30 0M1168.9 1013.2a2.15 2.15 0 1 0 4.30 0a2.15 2.15 0 1 0 -4.30 0M589.2 1019.0a2.15 2.15 0 1 0 4.30 0a2.15 2.15 0 1 0 -4.30 0M749.0 1019.0a2.15 2.15 0 1 0 4.30 0a2.15 2.15 0 1 0 -4.30 0M1009.2 1019.0a2.15 2.15 0 1 0 4.30 0a2.15 2.15 0 1 0 -4.30 0M1168.9 1019.0a2.15 2.15 0 1 0 4.30 0a2.15 2.15 0 1 0 -4.30 0M589.2 1024.8a2.15 2.15 0 1 0 4.30 0a2.15 2.15 0 1 0 -4.30 0M749.0 1024.8a2.15 2.15 0 1 0 4.30 0a2.15 2.15 0 1 0 -4.30 0M1009.2 1024.8a2.15 2.15 0 1 0 4.30 0a2.15 2.15 0 1 0 -4.30 0M1168.9 1024.8a2.15 2.15 0 1 0 4.30 0a2.15 2.15 0 1 0 -4.30 0M589.2 1030.6a2.15 2.15 0 1 0 4.30 0a2.15 2.15 0 1 0 -4.30 0M749.0 1030.6a2.15 2.15 0 1 0 4.30 0a2.15 2.15 0 1 0 -4.30 0M1009.2 1030.6a2.15 2.15 0 1 0 4.30 0a2.15 2.15 0 1 0 -4.30 0M1168.9 1030.6a2.15 2.15 0 1 0 4.30 0a2.15 2.15 0 1 0 -4.30 0M595.0 1047.2a2.15 2.15 0 1 0 4.30 0a2.15 2.15 0 1 0 -4.30 0M743.2 1047.2a2.15 2.15 0 1 0 4.30 0a2.15 2.15 0 1 0 -4.30 0M1015.0 1047.2a2.15 2.15 0 1 0 4.30 0a2.15 2.15 0 1 0 -4.30 0M1163.2 1047.2a2.15 2.15 0 1 0 4.30 0a2.15 2.15 0 1 0 -4.30 0M595.0 1053.0a2.15 2.15 0 1 0 4.30 0a2.15 2.15 0 1 0 -4.30 0M743.2 1053.0a2.15 2.15 0 1 0 4.30 0a2.15 2.15 0 1 0 -4.30 0M1015.0 1053.0a2.15 2.15 0 1 0 4.30 0a2.15 2.15 0 1 0 -4.30 0M1163.2 1053.0a2.15 2.15 0 1 0 4.30 0a2.15 2.15 0 1 0 -4.30 0M595.0 1058.8a2.15 2.15 0 1 0 4.30 0a2.15 2.15 0 1 0 -4.30 0M743.2 1058.8a2.15 2.15 0 1 0 4.30 0a2.15 2.15 0 1 0 -4.30 0M1015.0 1058.8a2.15 2.15 0 1 0 4.30 0a2.15 2.15 0 1 0 -4.30 0M1163.2 1058.8a2.15 2.15 0 1 0 4.30 0a2.15 2.15 0 1 0 -4.30 0M595.0 1064.6a2.15 2.15 0 1 0 4.30 0a2.15 2.15 0 1 0 -4.30 0M743.2 1064.6a2.15 2.15 0 1 0 4.30 0a2.15 2.15 0 1 0 -4.30 0M1015.0 1064.6a2.15 2.15 0 1 0 4.30 0a2.15 2.15 0 1 0 -4.30 0M1163.2 1064.6a2.15 2.15 0 1 0 4.30 0a2.15 2.15 0 1 0 -4.30 0M603.2 1081.2a2.15 2.15 0 1 0 4.30 0a2.15 2.15 0 1 0 -4.30 0M735.0 1081.2a2.15 2.15 0 1 0 4.30 0a2.15 2.15 0 1 0 -4.30 0M1023.3 1081.2a2.15 2.15 0 1 0 4.30 0a2.15 2.15 0 1 0 -4.30 0M1154.9 1081.2a2.15 2.15 0 1 0 4.30 0a2.15 2.15 0 1 0 -4.30 0M603.2 1087.0a2.15 2.15 0 1 0 4.30 0a2.15 2.15 0 1 0 -4.30 0M735.0 1087.0a2.15 2.15 0 1 0 4.30 0a2.15 2.15 0 1 0 -4.30 0M1023.3 1087.0a2.15 2.15 0 1 0 4.30 0a2.15 2.15 0 1 0 -4.30 0M1154.9 1087.0a2.15 2.15 0 1 0 4.30 0a2.15 2.15 0 1 0 -4.30 0M603.2 1092.8a2.15 2.15 0 1 0 4.30 0a2.15 2.15 0 1 0 -4.30 0M735.0 1092.8a2.15 2.15 0 1 0 4.30 0a2.15 2.15 0 1 0 -4.30 0M1023.3 1092.8a2.15 2.15 0 1 0 4.30 0a2.15 2.15 0 1 0 -4.30 0M1154.9 1092.8a2.15 2.15 0 1 0 4.30 0a2.15 2.15 0 1 0 -4.30 0M603.2 1098.6a2.15 2.15 0 1 0 4.30 0a2.15 2.15 0 1 0 -4.30 0M729.2 1098.6a2.15 2.15 0 1 0 4.30 0a2.15 2.15 0 1 0 -4.30 0M1028.9 1098.6a2.15 2.15 0 1 0 4.30 0a2.15 2.15 0 1 0 -4.30 0M1149.2 1098.6a2.15 2.15 0 1 0 4.30 0a2.15 2.15 0 1 0 -4.30 0M609.0 1115.2a2.15 2.15 0 1 0 4.30 0a2.15 2.15 0 1 0 -4.30 0M729.2 1115.2a2.15 2.15 0 1 0 4.30 0a2.15 2.15 0 1 0 -4.30 0M1028.9 1115.2a2.15 2.15 0 1 0 4.30 0a2.15 2.15 0 1 0 -4.30 0M1149.2 1115.2a2.15 2.15 0 1 0 4.30 0a2.15 2.15 0 1 0 -4.30 0M609.0 1121.0a2.15 2.15 0 1 0 4.30 0a2.15 2.15 0 1 0 -4.30 0M729.2 1121.0a2.15 2.15 0 1 0 4.30 0a2.15 2.15 0 1 0 -4.30 0M1028.9 1121.0a2.15 2.15 0 1 0 4.30 0a2.15 2.15 0 1 0 -4.30 0M1149.2 1121.0a2.15 2.15 0 1 0 4.30 0a2.15 2.15 0 1 0 -4.30 0M609.0 1126.8a2.15 2.15 0 1 0 4.30 0a2.15 2.15 0 1 0 -4.30 0M1037.2 1126.8a2.15 2.15 0 1 0 4.30 0a2.15 2.15 0 1 0 -4.30 0M617.2 1132.6a2.15 2.15 0 1 0 4.30 0a2.15 2.15 0 1 0 -4.30 0M1037.2 1132.6a2.15 2.15 0 1 0 4.30 0a2.15 2.15 0 1 0 -4.30 0M617.2 1149.2a2.15 2.15 0 1 0 4.30 0a2.15 2.15 0 1 0 -4.30 0M1037.2 1149.2a2.15 2.15 0 1 0 4.30 0a2.15 2.15 0 1 0 -4.30 0M623.0 1155.0a2.15 2.15 0 1 0 4.30 0a2.15 2.15 0 1 0 -4.30 0M1042.9 1155.0a2.15 2.15 0 1 0 4.30 0a2.15 2.15 0 1 0 -4.30 0M623.0 1160.8a2.15 2.15 0 1 0 4.30 0a2.15 2.15 0 1 0 -4.30 0M1042.9 1160.8a2.15 2.15 0 1 0 4.30 0a2.15 2.15 0 1 0 -4.30 0M623.0 1166.6a2.15 2.15 0 1 0 4.30 0a2.15 2.15 0 1 0 -4.30 0M1042.9 1166.6a2.15 2.15 0 1 0 4.30 0a2.15 2.15 0 1 0 -4.30 0M631.2 1183.2a2.15 2.15 0 1 0 4.30 0a2.15 2.15 0 1 0 -4.30 0M707.0 1183.2a2.15 2.15 0 1 0 4.30 0a2.15 2.15 0 1 0 -4.30 0M1051.2 1183.2a2.15 2.15 0 1 0 4.30 0a2.15 2.15 0 1 0 -4.30 0M1126.9 1183.2a2.15 2.15 0 1 0 4.30 0a2.15 2.15 0 1 0 -4.30 0M631.2 1189.0a2.15 2.15 0 1 0 4.30 0a2.15 2.15 0 1 0 -4.30 0M707.0 1189.0a2.15 2.15 0 1 0 4.30 0a2.15 2.15 0 1 0 -4.30 0M1051.2 1189.0a2.15 2.15 0 1 0 4.30 0a2.15 2.15 0 1 0 -4.30 0M1126.9 1189.0a2.15 2.15 0 1 0 4.30 0a2.15 2.15 0 1 0 -4.30 0M631.2 1194.8a2.15 2.15 0 1 0 4.30 0a2.15 2.15 0 1 0 -4.30 0M707.0 1194.8a2.15 2.15 0 1 0 4.30 0a2.15 2.15 0 1 0 -4.30 0M1056.9 1194.8a2.15 2.15 0 1 0 4.30 0a2.15 2.15 0 1 0 -4.30 0M1126.9 1194.8a2.15 2.15 0 1 0 4.30 0a2.15 2.15 0 1 0 -4.30 0M637.0 1200.6a2.15 2.15 0 1 0 4.30 0a2.15 2.15 0 1 0 -4.30 0M701.2 1200.6a2.15 2.15 0 1 0 4.30 0a2.15 2.15 0 1 0 -4.30 0M1056.9 1200.6a2.15 2.15 0 1 0 4.30 0a2.15 2.15 0 1 0 -4.30 0M1121.2 1200.6a2.15 2.15 0 1 0 4.30 0a2.15 2.15 0 1 0 -4.30 0M637.0 1217.2a2.15 2.15 0 1 0 4.30 0a2.15 2.15 0 1 0 -4.30 0M693.0 1217.2a2.15 2.15 0 1 0 4.30 0a2.15 2.15 0 1 0 -4.30 0M1065.2 1217.2a2.15 2.15 0 1 0 4.30 0a2.15 2.15 0 1 0 -4.30 0M1121.2 1217.2a2.15 2.15 0 1 0 4.30 0a2.15 2.15 0 1 0 -4.30 0M645.2 1223.0a2.15 2.15 0 1 0 4.30 0a2.15 2.15 0 1 0 -4.30 0M693.0 1223.0a2.15 2.15 0 1 0 4.30 0a2.15 2.15 0 1 0 -4.30 0M1065.2 1223.0a2.15 2.15 0 1 0 4.30 0a2.15 2.15 0 1 0 -4.30 0M1112.9 1223.0a2.15 2.15 0 1 0 4.30 0a2.15 2.15 0 1 0 -4.30 0M651.0 1228.8a2.15 2.15 0 1 0 4.30 0a2.15 2.15 0 1 0 -4.30 0M687.2 1228.8a2.15 2.15 0 1 0 4.30 0a2.15 2.15 0 1 0 -4.30 0M1070.9 1228.8a2.15 2.15 0 1 0 4.30 0a2.15 2.15 0 1 0 -4.30 0M1107.2 1228.8a2.15 2.15 0 1 0 4.30 0a2.15 2.15 0 1 0 -4.30 0M659.2 1234.6a2.15 2.15 0 1 0 4.30 0a2.15 2.15 0 1 0 -4.30 0M665.0 1234.6a2.15 2.15 0 1 0 4.30 0a2.15 2.15 0 1 0 -4.30 0M673.2 1234.6a2.15 2.15 0 1 0 4.30 0a2.15 2.15 0 1 0 -4.30 0M679.0 1234.6a2.15 2.15 0 1 0 4.30 0a2.15 2.15 0 1 0 -4.30 0M1079.2 1234.6a2.15 2.15 0 1 0 4.30 0a2.15 2.15 0 1 0 -4.30 0M1084.9 1234.6a2.15 2.15 0 1 0 4.30 0a2.15 2.15 0 1 0 -4.30 0M1093.2 1234.6a2.15 2.15 0 1 0 4.30 0a2.15 2.15 0 1 0 -4.30 0M1098.9 1234.6a2.15 2.15 0 1 0 4.30 0a2.15 2.15 0 1 0 -4.30 0"/>
<path fill="#6b70ff" d="M463.2 129.2a2.15 2.15 0 1 0 4.30 0a2.15 2.15 0 1 0 -4.30 0M469.0 129.2a2.15 2.15 0 1 0 4.30 0a2.15 2.15 0 1 0 -4.30 0M673.2 129.2a2.15 2.15 0 1 0 4.30 0a2.15 2.15 0 1 0 -4.30 0M679.0 129.2a2.15 2.15 0 1 0 4.30 0a2.15 2.15 0 1 0 -4.30 0M869.2 129.2a2.15 2.15 0 1 0 4.30 0a2.15 2.15 0 1 0 -4.30 0M875.0 129.2a2.15 2.15 0 1 0 4.30 0a2.15 2.15 0 1 0 -4.30 0M883.2 129.2a2.15 2.15 0 1 0 4.30 0a2.15 2.15 0 1 0 -4.30 0M889.0 129.2a2.15 2.15 0 1 0 4.30 0a2.15 2.15 0 1 0 -4.30 0M1093.2 129.2a2.15 2.15 0 1 0 4.30 0a2.15 2.15 0 1 0 -4.30 0M1098.9 129.2a2.15 2.15 0 1 0 4.30 0a2.15 2.15 0 1 0 -4.30 0M1289.2 129.2a2.15 2.15 0 1 0 4.30 0a2.15 2.15 0 1 0 -4.30 0M1294.9 129.2a2.15 2.15 0 1 0 4.30 0a2.15 2.15 0 1 0 -4.30 0M673.2 135.0a2.15 2.15 0 1 0 4.30 0a2.15 2.15 0 1 0 -4.30 0M875.0 135.0a2.15 2.15 0 1 0 4.30 0a2.15 2.15 0 1 0 -4.30 0M1093.2 135.0a2.15 2.15 0 1 0 4.30 0a2.15 2.15 0 1 0 -4.30 0M1294.9 135.0a2.15 2.15 0 1 0 4.30 0a2.15 2.15 0 1 0 -4.30 0M673.2 140.8a2.15 2.15 0 1 0 4.30 0a2.15 2.15 0 1 0 -4.30 0M875.0 140.8a2.15 2.15 0 1 0 4.30 0a2.15 2.15 0 1 0 -4.30 0M1093.2 140.8a2.15 2.15 0 1 0 4.30 0a2.15 2.15 0 1 0 -4.30 0M1294.9 140.8a2.15 2.15 0 1 0 4.30 0a2.15 2.15 0 1 0 -4.30 0M673.2 146.6a2.15 2.15 0 1 0 4.30 0a2.15 2.15 0 1 0 -4.30 0M875.0 146.6a2.15 2.15 0 1 0 4.30 0a2.15 2.15 0 1 0 -4.30 0M1093.2 146.6a2.15 2.15 0 1 0 4.30 0a2.15 2.15 0 1 0 -4.30 0M1294.9 146.6a2.15 2.15 0 1 0 4.30 0a2.15 2.15 0 1 0 -4.30 0M679.0 163.2a2.15 2.15 0 1 0 4.30 0a2.15 2.15 0 1 0 -4.30 0M869.2 163.2a2.15 2.15 0 1 0 4.30 0a2.15 2.15 0 1 0 -4.30 0M875.0 163.2a2.15 2.15 0 1 0 4.30 0a2.15 2.15 0 1 0 -4.30 0M1098.9 163.2a2.15 2.15 0 1 0 4.30 0a2.15 2.15 0 1 0 -4.30 0M1289.2 163.2a2.15 2.15 0 1 0 4.30 0a2.15 2.15 0 1 0 -4.30 0M1294.9 163.2a2.15 2.15 0 1 0 4.30 0a2.15 2.15 0 1 0 -4.30 0M679.0 169.0a2.15 2.15 0 1 0 4.30 0a2.15 2.15 0 1 0 -4.30 0M869.2 169.0a2.15 2.15 0 1 0 4.30 0a2.15 2.15 0 1 0 -4.30 0M1098.9 169.0a2.15 2.15 0 1 0 4.30 0a2.15 2.15 0 1 0 -4.30 0M1289.2 169.0a2.15 2.15 0 1 0 4.30 0a2.15 2.15 0 1 0 -4.30 0M679.0 174.8a2.15 2.15 0 1 0 4.30 0a2.15 2.15 0 1 0 -4.30 0M869.2 174.8a2.15 2.15 0 1 0 4.30 0a2.15 2.15 0 1 0 -4.30 0M1098.9 174.8a2.15 2.15 0 1 0 4.30 0a2.15 2.15 0 1 0 -4.30 0M1289.2 174.8a2.15 2.15 0 1 0 4.30 0a2.15 2.15 0 1 0 -4.30 0M679.0 180.6a2.15 2.15 0 1 0 4.30 0a2.15 2.15 0 1 0 -4.30 0M869.2 180.6a2.15 2.15 0 1 0 4.30 0a2.15 2.15 0 1 0 -4.30 0M1098.9 180.6a2.15 2.15 0 1 0 4.30 0a2.15 2.15 0 1 0 -4.30 0M1289.2 180.6a2.15 2.15 0 1 0 4.30 0a2.15 2.15 0 1 0 -4.30 0M687.2 197.2a2.15 2.15 0 1 0 4.30 0a2.15 2.15 0 1 0 -4.30 0M861.0 197.2a2.15 2.15 0 1 0 4.30 0a2.15 2.15 0 1 0 -4.30 0M869.2 197.2a2.15 2.15 0 1 0 4.30 0a2.15 2.15 0 1 0 -4.30 0M1107.2 197.2a2.15 2.15 0 1 0 4.30 0a2.15 2.15 0 1 0 -4.30 0M1280.9 197.2a2.15 2.15 0 1 0 4.30 0a2.15 2.15 0 1 0 -4.30 0M1289.2 197.2a2.15 2.15 0 1 0 4.30 0a2.15 2.15 0 1 0 -4.30 0M687.2 203.0a2.15 2.15 0 1 0 4.30 0a2.15 2.15 0 1 0 -4.30 0M861.0 203.0a2.15 2.15 0 1 0 4.30 0a2.15 2.15 0 1 0 -4.30 0M1107.2 203.0a2.15 2.15 0 1 0 4.30 0a2.15 2.15 0 1 0 -4.30 0M1280.9 203.0a2.15 2.15 0 1 0 4.30 0a2.15 2.15 0 1 0 -4.30 0M687.2 208.8a2.15 2.15 0 1 0 4.30 0a2.15 2.15 0 1 0 -4.30 0M861.0 208.8a2.15 2.15 0 1 0 4.30 0a2.15 2.15 0 1 0 -4.30 0M1107.2 208.8a2.15 2.15 0 1 0 4.30 0a2.15 2.15 0 1 0 -4.30 0M1280.9 208.8a2.15 2.15 0 1 0 4.30 0a2.15 2.15 0 1 0 -4.30 0M687.2 214.6a2.15 2.15 0 1 0 4.30 0a2.15 2.15 0 1 0 -4.30 0M861.0 214.6a2.15 2.15 0 1 0 4.30 0a2.15 2.15 0 1 0 -4.30 0M1107.2 214.6a2.15 2.15 0 1 0 4.30 0a2.15 2.15 0 1 0 -4.30 0M1280.9 214.6a2.15 2.15 0 1 0 4.30 0a2.15 2.15 0 1 0 -4.30 0M687.2 231.2a2.15 2.15 0 1 0 4.30 0a2.15 2.15 0 1 0 -4.30 0M693.0 231.2a2.15 2.15 0 1 0 4.30 0a2.15 2.15 0 1 0 -4.30 0M855.2 231.2a2.15 2.15 0 1 0 4.30 0a2.15 2.15 0 1 0 -4.30 0M861.0 231.2a2.15 2.15 0 1 0 4.30 0a2.15 2.15 0 1 0 -4.30 0M1107.2 231.2a2.15 2.15 0 1 0 4.30 0a2.15 2.15 0 1 0 -4.30 0M1112.9 231.2a2.15 2.15 0 1 0 4.30 0a2.15 2.15 0 1 0 -4.30 0M1275.2 231.2a2.15 2.15 0 1 0 4.30 0a2.15 2.15 0 1 0 -4.30 0M1280.9 231.2a2.15 2.15 0 1 0 4.30 0a2.15 2.15 0 1 0 -4.30 0M693.0 237.0a2.15 2.15 0 1 0 4.30 0a2.15 2.15 0 1 0 -4.30 0M855.2 237.0a2.15 2.15 0 1 0 4.30 0a2.15 2.15 0 1 0 -4.30 0M1112.9 237.0a2.15 2.15 0 1 0 4.30 0a2.15 2.15 0 1 0 -4.30 0M1275.2 237.0a2.15 2.15 0 1 0 4.30 0a2.15 2.15 0 1 0 -4.30 0M693.0 242.8a2.15 2.15 0 1 0 4.30 0a2.15 2.15 0 1 0 -4.30 0M855.2 242.8a2.15 2.15 0 1 0 4.30 0a2.15 2.15 0 1 0 -4.30 0M1112.9 242.8a2.15 2.15 0 1 0 4.30 0a2.15 2.15 0 1 0 -4.30 0M1275.2 242.8a2.15 2.15 0 1 0 4.30 0a2.15 2.15 0 1 0 -4.30 0M693.0 248.6a2.15 2.15 0 1 0 4.30 0a2.15 2.15 0 1 0 -4.30 0M855.2 248.6a2.15 2.15 0 1 0 4.30 0a2.15 2.15 0 1 0 -4.30 0M1112.9 248.6a2.15 2.15 0 1 0 4.30 0a2.15 2.15 0 1 0 -4.30 0M1275.2 248.6a2.15 2.15 0 1 0 4.30 0a2.15 2.15 0 1 0 -4.30 0M701.2 265.2a2.15 2.15 0 1 0 4.30 0a2.15 2.15 0 1 0 -4.30 0M847.0 265.2a2.15 2.15 0 1 0 4.30 0a2.15 2.15 0 1 0 -4.30 0M855.2 265.2a2.15 2.15 0 1 0 4.30 0a2.15 2.15 0 1 0 -4.30 0M1121.2 265.2a2.15 2.15 0 1 0 4.30 0a2.15 2.15 0 1 0 -4.30 0M1266.9 265.2a2.15 2.15 0 1 0 4.30 0a2.15 2.15 0 1 0 -4.30 0M1275.2 265.2a2.15 2.15 0 1 0 4.30 0a2.15 2.15 0 1 0 -4.30 0M701.2 271.0a2.15 2.15 0 1 0 4.30 0a2.15 2.15 0 1 0 -4.30 0M847.0 271.0a2.15 2.15 0 1 0 4.30 0a2.15 2.15 0 1 0 -4.30 0M1121.2 271.0a2.15 2.15 0 1 0 4.30 0a2.15 2.15 0 1 0 -4.30 0M1266.9 271.0a2.15 2.15 0 1 0 4.30 0a2.15 2.15 0 1 0 -4.30 0M701.2 276.8a2.15 2.15 0 1 0 4.30 0a2.15 2.15 0 1 0 -4.30 0M847.0 276.8a2.15 2.15 0 1 0 4.30 0a2.15 2.15 0 1 0 -4.30 0M1121.2 276.8a2.15 2.15 0 1 0 4.30 0a2.15 2.15 0 1 0 -4.30 0M1266.9 276.8a2.15 2.15 0 1 0 4.30 0a2.15 2.15 0 1 0 -4.30 0M701.2 282.6a2.15 2.15 0 1 0 4.30 0a2.15 2.15 0 1 0 -4.30 0M847.0 282.6a2.15 2.15 0 1 0 4.30 0a2.15 2.15 0 1 0 -4.30 0M1121.2 282.6a2.15 2.15 0 1 0 4.30 0a2.15 2.15 0 1 0 -4.30 0M1266.9 282.6a2.15 2.15 0 1 0 4.30 0a2.15 2.15 0 1 0 -4.30 0M707.0 299.2a2.15 2.15 0 1 0 4.30 0a2.15 2.15 0 1 0 -4.30 0M841.2 299.2a2.15 2.15 0 1 0 4.30 0a2.15 2.15 0 1 0 -4.30 0M1126.9 299.2a2.15 2.15 0 1 0 4.30 0a2.15 2.15 0 1 0 -4.30 0M1261.2 299.2a2.15 2.15 0 1 0 4.30 0a2.15 2.15 0 1 0 -4.30 0M1266.9 299.2a2.15 2.15 0 1 0 4.30 0a2.15 2.15 0 1 0 -4.30 0M707.0 305.0a2.15 2.15 0 1 0 4.30 0a2.15 2.15 0 1 0 -4.30 0M841.2 305.0a2.15 2.15 0 1 0 4.30 0a2.15 2.15 0 1 0 -4.30 0M1126.9 305.0a2.15 2.15 0 1 0 4.30 0a2.15 2.15 0 1 0 -4.30 0M1261.2 305.0a2.15 2.15 0 1 0 4.30 0a2.15 2.15 0 1 0 -4.30 0M707.0 310.8a2.15 2.15 0 1 0 4.30 0a2.15 2.15 0 1 0 -4.30 0M841.2 310.8a2.15 2.15 0 1 0 4.30 0a2.15 2.15 0 1 0 -4.30 0M1126.9 310.8a2.15 2.15 0 1 0 4.30 0a2.15 2.15 0 1 0 -4.30 0M1261.2 310.8a2.15 2.15 0 1 0 4.30 0a2.15 2.15 0 1 0 -4.30 0M707.0 316.6a2.15 2.15 0 1 0 4.30 0a2.15 2.15 0 1 0 -4.30 0M715.2 316.6a2.15 2.15 0 1 0 4.30 0a2.15 2.15 0 1 0 -4.30 0M833.0 316.6a2.15 2.15 0 1 0 4.30 0a2.15 2.15 0 1 0 -4.30 0M841.2 316.6a2.15 2.15 0 1 0 4.30 0a2.15 2.15 0 1 0 -4.30 0M1126.9 316.6a2.15 2.15 0 1 0 4.30 0a2.15 2.15 0 1 0 -4.30 0M1135.2 316.6a2.15 2.15 0 1 0 4.30 0a2.15 2.15 0 1 0 -4.30 0M1252.9 316.6a2.15 2.15 0 1 0 4.30 0a2.15 2.15 0 1 0 -4.30 0M1261.2 316.6a2.15 2.15 0 1 0 4.30 0a2.15 2.15 0 1 0 -4.30 0M833.0 333.2a2.15 2.15 0 1 0 4.30 0a2.15 2.15 0 1 0 -4.30 0M1252.9 333.2a2.15 2.15 0 1 0 4.30 0a2.15 2.15 0 1 0 -4.30 0M833.0 339.0a2.15 2.15 0 1 0 4.30 0a2.15 2.15 0 1 0 -4.30 0M1252.9 339.0a2.15 2.15 0 1 0 4.30 0a2.15 2.15 0 1 0 -4.30 0M833.0 344.8a2.15 2.15 0 1 0 4.30 0a2.15 2.15 0 1 0 -4.30 0M1252.9 344.8a2.15 2.15 0 1 0 4.30 0a2.15 2.15 0 1 0 -4.30 0M827.2 350.6a2.15 2.15 0 1 0 4.30 0a2.15 2.15 0 1 0 -4.30 0M1247.2 350.6a2.15 2.15 0 1 0 4.30 0a2.15 2.15 0 1 0 -4.30 0M827.2 367.2a2.15 2.15 0 1 0 4.30 0a2.15 2.15 0 1 0 -4.30 0M1247.2 367.2a2.15 2.15 0 1 0 4.30 0a2.15 2.15 0 1 0 -4.30 0M729.2 373.0a2.15 2.15 0 1 0 4.30 0a2.15 2.15 0 1 0 -4.30 0M819.0 373.0a2.15 2.15 0 1 0 4.30 0a2.15 2.15 0 1 0 -4.30 0M827.2 373.0a2.15 2.15 0 1 0 4.30 0a2.15 2.15 0 1 0 -4.30 0M1149.2 373.0a2.15 2.15 0 1 0 4.30 0a2.15 2.15 0 1 0 -4.30 0M1238.9 373.0a2.15 2.15 0 1 0 4.30 0a2.15 2.15 0 1 0 -4.30 0M1247.2 373.0a2.15 2.15 0 1 0 4.30 0a2.15 2.15 0 1 0 -4.30 0M729.2 378.8a2.15 2.15 0 1 0 4.30 0a2.15 2.15 0 1 0 -4.30 0M819.0 378.8a2.15 2.15 0 1 0 4.30 0a2.15 2.15 0 1 0 -4.30 0M1149.2 378.8a2.15 2.15 0 1 0 4.30 0a2.15 2.15 0 1 0 -4.30 0M1238.9 378.8a2.15 2.15 0 1 0 4.30 0a2.15 2.15 0 1 0 -4.30 0M729.2 384.6a2.15 2.15 0 1 0 4.30 0a2.15 2.15 0 1 0 -4.30 0M819.0 384.6a2.15 2.15 0 1 0 4.30 0a2.15 2.15 0 1 0 -4.30 0M1149.2 384.6a2.15 2.15 0 1 0 4.30 0a2.15 2.15 0 1 0 -4.30 0M1238.9 384.6a2.15 2.15 0 1 0 4.30 0a2.15 2.15 0 1 0 -4.30 0M729.2 401.2a2.15 2.15 0 1 0 4.30 0a2.15 2.15 0 1 0 -4.30 0M735.0 401.2a2.15 2.15 0 1 0 4.30 0a2.15 2.15 0 1 0 -4.30 0M813.2 401.2a2.15 2.15 0 1 0 4.30 0a2.15 2.15 0 1 0 -4.30 0M819.0 401.2a2.15 2.15 0 1 0 4.30 0a2.15 2.15 0 1 0 -4.30 0M1149.2 401.2a2.15 2.15 0 1 0 4.30 0a2.15 2.15 0 1 0 -4.30 0M1154.9 401.2a2.15 2.15 0 1 0 4.30 0a2.15 2.15 0 1 0 -4.30 0M1233.2 401.2a2.15 2.15 0 1 0 4.30 0a2.15 2.15 0 1 0 -4.30 0M1238.9 401.2a2.15 2.15 0 1 0 4.30 0a2.15 2.15 0 1 0 -4.30 0M735.0 407.0a2.15 2.15 0 1 0 4.30 0a2.15 2.15 0 1 0 -4.30 0M813.2 407.0a2.15 2.15 0 1 0 4.30 0a2.15 2.15 0 1 0 -4.30 0M1154.9 407.0a2.15 2.15 0 1 0 4.30 0a2.15 2.15 0 1 0 -4.30 0M1233.2 407.0a2.15 2.15 0 1 0 4.30 0a2.15 2.15 0 1 0 -4.30 0M735.0 412.8a2.15 2.15 0 1 0 4.30 0a2.15 2.15 0 1 0 -4.30 0M743.2 412.8a2.15 2.15 0 1 0 4.30 0a2.15 2.15 0 1 0 -4.30 0M805.0 412.8a2.15 2.15 0 1 0 4.30 0a2.15 2.15 0 1 0 -4.30 0M813.2 412.8a2.15 2.15 0 1 0 4.30 0a2.15 2.15 0 1 0 -4.30 0M1154.9 412.8a2.15 2.15 0 1 0 4.30 0a2.15 2.15 0 1 0 -4.30 0M1163.2 412.8a2.15 2.15 0 1 0 4.30 0a2.15 2.15 0 1 0 -4.30 0M1224.9 412.8a2.15 2.15 0 1 0 4.30 0a2.15 2.15 0 1 0 -4.30 0M1233.2 412.8a2.15 2.15 0 1 0 4.30 0a2.15 2.15 0 1 0 -4.30 0M743.2 418.6a2.15 2.15 0 1 0 4.30 0a2.15 2.15 0 1 0 -4.30 0M805.0 418.6a2.15 2.15 0 1 0 4.30 0a2.15 2.15 0 1 0 -4.30 0M1163.2 418.6a2.15 2.15 0 1 0 4.30 0a2.15 2.15 0 1 0 -4.30 0M1224.9 418.6a2.15 2.15 0 1 0 4.30 0a2.15 2.15 0 1 0 -4.30 0M743.2 435.2a2.15 2.15 0 1 0 4.30 0a2.15 2.15 0 1 0 -4.30 0M749.0 435.2a2.15 2.15 0 1 0 4.30 0a2.15 2.15 0 1 0 -4.30 0M799.2 435.2a2.15 2.15 0 1 0 4.30 0a2.15 2.15 0 1 0 -4.30 0M805.0 435.2a2.15 2.15 0 1 0 4.30 0a2.15 2.15 0 1 0 -4.30 0M1163.2 435.2a2.15 2.15 0 1 0 4.30 0a2.15 2.15 0 1 0 -4.30 0M1168.9 435.2a2.15 2.15 0 1 0 4.30 0a2.15 2.15 0 1 0 -4.30 0M1219.2 435.2a2.15 2.15 0 1 0 4.30 0a2.15 2.15 0 1 0 -4.30 0M1224.9 435.2a2.15 2.15 0 1 0 4.30 0a2.15 2.15 0 1 0 -4.30 0M749.0 441.0a2.15 2.15 0 1 0 4.30 0a2.15 2.15 0 1 0 -4.30 0M799.2 441.0a2.15 2.15 0 1 0 4.30 0a2.15 2.15 0 1 0 -4.30 0M1168.9 441.0a2.15 2.15 0 1 0 4.30 0a2.15 2.15 0 1 0 -4.30 0M1219.2 441.0a2.15 2.15 0 1 0 4.30 0a2.15 2.15 0 1 0 -4.30 0M757.2 446.8a2.15 2.15 0 1 0 4.30 0a2.15 2.15 0 1 0 -4.30 0M791.0 446.8a2.15 2.15 0 1 0 4.30 0a2.15 2.15 0 1 0 -4.30 0M1177.2 446.8a2.15 2.15 0 1 0 4.30 0a2.15 2.15 0 1 0 -4.30 0M1210.9 446.8a2.15 2.15 0 1 0 4.30 0a2.15 2.15 0 1 0 -4.30 0M1219.2 446.8a2.15 2.15 0 1 0 4.30 0a2.15 2.15 0 1 0 -4.30 0M757.2 452.6a2.15 2.15 0 1 0 4.30 0a2.15 2.15 0 1 0 -4.30 0M763.0 452.6a2.15 2.15 0 1 0 4.30 0a2.15 2.15 0 1 0 -4.30 0M771.2 452.6a2.15 2.15 0 1 0 4.30 0a2.15 2.15 0 1 0 -4.30 0M777.0 452.6a2.15 2.15 0 1 0 4.30 0a2.15 2.15 0 1 0 -4.30 0M785.2 452.6a2.15 2.15 0 1 0 4.30 0a2.15 2.15 0 1 0 -4.30 0M791.0 452.6a2.15 2.15 0 1 0 4.30 0a2.15 2.15 0 1 0 -4.30 0M1177.2 452.6a2.15 2.15 0 1 0 4.30 0a2.15 2.15 0 1 0 -4.30 0M1182.9 452.6a2.15 2.15 0 1 0 4.30 0a2.15 2.15 0 1 0 -4.30 0M1191.2 452.6a2.15 2.15 0 1 0 4.30 0a2.15 2.15 0 1 0 -4.30 0M1196.9 452.6a2.15 2.15 0 1 0 4.30 0a2.15 2.15 0 1 0 -4.30 0M1205.2 452.6a2.15 2.15 0 1 0 4.30 0a2.15 2.15 0 1 0 -4.30 0M1210.9 452.6a2.15 2.15 0 1 0 4.30 0a2.15 2.15 0 1 0 -4.30 0M553.0 571.2a2.15 2.15 0 1 0 4.30 0a2.15 2.15 0 1 0 -4.30 0M561.2 571.2a2.15 2.15 0 1 0 4.30 0a2.15 2.15 0 1 0 -4.30 0M567.0 571.2a2.15 2.15 0 1 0 4.30 0a2.15 2.15 0 1 0 -4.30 0M575.2 571.2a2.15 2.15 0 1 0 4.30 0a2.15 2.15 0 1 0 -4.30 0M973.0 571.2a2.15 2.15 0 1 0 4.30 0a2.15 2.15 0 1 0 -4.30 0M981.2 571.2a2.15 2.15 0 1 0 4.30 0a2.15 2.15 0 1 0 -4.30 0M987.0 571.2a2.15 2.15 0 1 0 4.30 0a2.15 2.15 0 1 0 -4.30 0M995.2 571.2a2.15 2.15 0 1 0 4.30 0a2.15 2.15 0 1 0 -4.30 0M547.2 577.0a2.15 2.15 0 1 0 4.30 0a2.15 2.15 0 1 0 -4.30 0M581.0 577.0a2.15 2.15 0 1 0 4.30 0a2.15 2.15 0 1 0 -4.30 0M967.2 577.0a2.15 2.15 0 1 0 4.30 0a2.15 2.15 0 1 0 -4.30 0M1001.0 577.0a2.15 2.15 0 1 0 4.30 0a2.15 2.15 0 1 0 -4.30 0M547.2 582.8a2.15 2.15 0 1 0 4.30 0a2.15 2.15 0 1 0 -4.30 0M589.2 582.8a2.15 2.15 0 1 0 4.30 0a2.15 2.15 0 1 0 -4.30 0M967.2 582.8a2.15 2.15 0 1 0 4.30 0a2.15 2.15 0 1 0 -4.30 0M1001.0 582.8a2.15 2.15 0 1 0 4.30 0a2.15 2.15 0 1 0 -4.30 0M539.0 588.6a2.15 2.15 0 1 0 4.30 0a2.15 2.15 0 1 0 -4.30 0M589.2 588.6a2.15 2.15 0 1 0 4.30 0a2.15 2.15 0 1 0 -4.30 0M959.0 588.6a2.15 2.15 0 1 0 4.30 0a2.15 2.15 0 1 0 -4.30 0M1009.2 588.6a2.15 2.15 0 1 0 4.30 0a2.15 2.15 0 1 0 -4.30 0M533.2 605.2a2.15 2.15 0 1 0 4.30 0a2.15 2.15 0 1 0 -4.30 0M595.0 605.2a2.15 2.15 0 1 0 4.30 0a2.15 2.15 0 1 0 -4.30 0M953.2 605.2a2.15 2.15 0 1 0 4.30 0a2.15 2.15 0 1 0 -4.30 0M1015.0 605.2a2.15 2.15 0 1 0 4.30 0a2.15 2.15 0 1 0 -4.30 0M525.0 611.0a2.15 2.15 0 1 0 4.30 0a2.15 2.15 0 1 0 -4.30 0M533.2 611.0a2.15 2.15 0 1 0 4.30 0a2.15 2.15 0 1 0 -4.30 0M595.0 611.0a2.15 2.15 0 1 0 4.30 0a2.15 2.15 0 1 0 -4.30 0M953.2 611.0a2.15 2.15 0 1 0 4.30 0a2.15 2.15 0 1 0 -4.30 0M1015.0 611.0a2.15 2.15 0 1 0 4.30 0a2.15 2.15 0 1 0 -4.30 0M525.0 616.8a2.15 2.15 0 1 0 4.30 0a2.15 2.15 0 1 0 -4.30 0M603.2 616.8a2.15 2.15 0 1 0 4.30 0a2.15 2.15 0 1 0 -4.30 0M945.0 616.8a2.15 2.15 0 1 0 4.30 0a2.15 2.15 0 1 0 -4.30 0M1023.3 616.8a2.15 2.15 0 1 0 4.30 0a2.15 2.15 0 1 0 -4.30 0M519.2 622.6a2.15 2.15 0 1 0 4.30 0a2.15 2.15 0 1 0 -4.30 0M603.2 622.6a2.15 2.15 0 1 0 4.30 0a2.15 2.15 0 1 0 -4.30 0M939.2 622.6a2.15 2.15 0 1 0 4.30 0a2.15 2.15 0 1 0 -4.30 0M945.0 622.6a2.15 2.15 0 1 0 4.30 0a2.15 2.15 0 1 0 -4.30 0M1023.3 622.6a2.15 2.15 0 1 0 4.30 0a2.15 2.15 0 1 0 -4.30 0M519.2 639.2a2.15 2.15 0 1 0 4.30 0a2.15 2.15 0 1 0 -4.30 0M609.0 639.2a2.15 2.15 0 1 0 4.30 0a2.15 2.15 0 1 0 -4.30 0M939.2 639.2a2.15 2.15 0 1 0 4.30 0a2.15 2.15 0 1 0 -4.30 0M1028.9 639.2a2.15 2.15 0 1 0 4.30 0a2.15 2.15 0 1 0 -4.30 0M519.2 645.0a2.15 2.15 0 1 0 4.30 0a2.15 2.15 0 1 0 -4.30 0M609.0 645.0a2.15 2.15 0 1 0 4.30 0a2.15 2.15 0 1 0 -4.30 0M939.2 645.0a2.15 2.15 0 1 0 4.30 0a2.15 2.15 0 1 0 -4.30 0M1028.9 645.0a2.15 2.15 0 1 0 4.30 0a2.15 2.15 0 1 0 -4.30 0M519.2 650.8a2.15 2.15 0 1 0 4.30 0a2.15 2.15 0 1 0 -4.30 0M609.0 650.8a2.15 2.15 0 1 0 4.30 0a2.15 2.15 0 1 0 -4.30 0M1037.2 650.8a2.15 2.15 0 1 0 4.30 0a2.15 2.15 0 1 0 -4.30 0M617.2 656.6a2.15 2.15 0 1 0 4.30 0a2.15 2.15 0 1 0 -4.30 0M1037.2 656.6a2.15 2.15 0 1 0 4.30 0a2.15 2.15 0 1 0 -4.30 0M617.2 673.2a2.15 2.15 0 1 0 4.30 0a2.15 2.15 0 1 0 -4.30 0M1037.2 673.2a2.15 2.15 0 1 0 4.30 0a2.15 2.15 0 1 0 -4.30 0M617.2 679.0a2.15 2.15 0 1 0 4.30 0a2.15 2.15 0 1 0 -4.30 0M1042.9 679.0a2.15 2.15 0 1 0 4.30 0a2.15 2.15 0 1 0 -4.30 0M623.0 684.8a2.15 2.15 0 1 0 4.30 0a2.15 2.15 0 1 0 -4.30 0M1042.9 684.8a2.15 2.15 0 1 0 4.30 0a2.15 2.15 0 1 0 -4.30 0M623.0 690.6a2.15 2.15 0 1 0 4.30 0a2.15 2.15 0 1 0 -4.30 0M1042.9 690.6a2.15 2.15 0 1 0 4.30 0a2.15 2.15 0 1 0 -4.30 0M505.2 707.2a2.15 2.15 0 1 0 4.30 0a2.15 2.15 0 1 0 -4.30 0M623.0 707.2a2.15 2.15 0 1 0 4.30 0a2.15 2.15 0 1 0 -4.30 0M917.0 707.2a2.15 2.15 0 1 0 4.30 0a2.15 2.15 0 1 0 -4.30 0M1042.9 707.2a2.15 2.15 0 1 0 4.30 0a2.15 2.15 0 1 0 -4.30 0M497.0 713.0a2.15 2.15 0 1 0 4.30 0a2.15 2.15 0 1 0 -4.30 0M631.2 713.0a2.15 2.15 0 1 0 4.30 0a2.15 2.15 0 1 0 -4.30 0M917.0 713.0a2.15 2.15 0 1 0 4.30 0a2.15 2.15 0 1 0 -4.30 0M1051.2 713.0a2.15 2.15 0 1 0 4.30 0a2.15 2.15 0 1 0 -4.30 0M497.0 718.8a2.15 2.15 0 1 0 4.30 0a2.15 2.15 0 1 0 -4.30 0M631.2 718.8a2.15 2.15 0 1 0 4.30 0a2.15 2.15 0 1 0 -4.30 0M917.0 718.8a2.15 2.15 0 1 0 4.30 0a2.15 2.15 0 1 0 -4.30 0M1051.2 718.8a2.15 2.15 0 1 0 4.30 0a2.15 2.15 0 1 0 -4.30 0M497.0 724.6a2.15 2.15 0 1 0 4.30 0a2.15 2.15 0 1 0 -4.30 0M631.2 724.6a2.15 2.15 0 1 0 4.30 0a2.15 2.15 0 1 0 -4.30 0M917.0 724.6a2.15 2.15 0 1 0 4.30 0a2.15 2.15 0 1 0 -4.30 0M1051.2 724.6a2.15 2.15 0 1 0 4.30 0a2.15 2.15 0 1 0 -4.30 0M491.2 741.2a2.15 2.15 0 1 0 4.30 0a2.15 2.15 0 1 0 -4.30 0M637.0 741.2a2.15 2.15 0 1 0 4.30 0a2.15 2.15 0 1 0 -4.30 0M911.2 741.2a2.15 2.15 0 1 0 4.30 0a2.15 2.15 0 1 0 -4.30 0M1056.9 741.2a2.15 2.15 0 1 0 4.30 0a2.15 2.15 0 1 0 -4.30 0M491.2 747.0a2.15 2.15 0 1 0 4.30 0a2.15 2.15 0 1 0 -4.30 0M637.0 747.0a2.15 2.15 0 1 0 4.30 0a2.15 2.15 0 1 0 -4.30 0M911.2 747.0a2.15 2.15 0 1 0 4.30 0a2.15 2.15 0 1 0 -4.30 0M1056.9 747.0a2.15 2.15 0 1 0 4.30 0a2.15 2.15 0 1 0 -4.30 0M491.2 752.8a2.15 2.15 0 1 0 4.30 0a2.15 2.15 0 1 0 -4.30 0M637.0 752.8a2.15 2.15 0 1 0 4.30 0a2.15 2.15 0 1 0 -4.30 0M911.2 752.8a2.15 2.15 0 1 0 4.30 0a2.15 2.15 0 1 0 -4.30 0M1056.9 752.8a2.15 2.15 0 1 0 4.30 0a2.15 2.15 0 1 0 -4.30 0M491.2 758.6a2.15 2.15 0 1 0 4.30 0a2.15 2.15 0 1 0 -4.30 0M645.2 758.6a2.15 2.15 0 1 0 4.30 0a2.15 2.15 0 1 0 -4.30 0M911.2 758.6a2.15 2.15 0 1 0 4.30 0a2.15 2.15 0 1 0 -4.30 0M1056.9 758.6a2.15 2.15 0 1 0 4.30 0a2.15 2.15 0 1 0 -4.30 0M483.0 775.2a2.15 2.15 0 1 0 4.30 0a2.15 2.15 0 1 0 -4.30 0M645.2 775.2a2.15 2.15 0 1 0 4.30 0a2.15 2.15 0 1 0 -4.30 0M903.0 775.2a2.15 2.15 0 1 0 4.30 0a2.15 2.15 0 1 0 -4.30 0M1065.2 775.2a2.15 2.15 0 1 0 4.30 0a2.15 2.15 0 1 0 -4.30 0M483.0 781.0a2.15 2.15 0 1 0 4.30 0a2.15 2.15 0 1 0 -4.30 0M645.2 781.0a2.15 2.15 0 1 0 4.30 0a2.15 2.15 0 1 0 -4.30 0M903.0 781.0a2.15 2.15 0 1 0 4.30 0a2.15 2.15 0 1 0 -4.30 0M1065.2 781.0a2.15 2.15 0 1 0 4.30 0a2.15 2.15 0 1 0 -4.30 0M483.0 786.8a2.15 2.15 0 1 0 4.30 0a2.15 2.15 0 1 0 -4.30 0M645.2 786.8a2.15 2.15 0 1 0 4.30 0a2.15 2.15 0 1 0 -4.30 0M903.0 786.8a2.15 2.15 0 1 0 4.30 0a2.15 2.15 0 1 0 -4.30 0M1065.2 786.8a2.15 2.15 0 1 0 4.30 0a2.15 2.15 0 1 0 -4.30 0M483.0 792.6a2.15 2.15 0 1 0 4.30 0a2.15 2.15 0 1 0 -4.30 0M645.2 792.6a2.15 2.15 0 1 0 4.30 0a2.15 2.15 0 1 0 -4.30 0M897.2 792.6a2.15 2.15 0 1 0 4.30 0a2.15 2.15 0 1 0 -4.30 0M903.0 792.6a2.15 2.15 0 1 0 4.30 0a2.15 2.15 0 1 0 -4.30 0M1065.2 792.6a2.15 2.15 0 1 0 4.30 0a2.15 2.15 0 1 0 -4.30 0M477.2 809.2a2.15 2.15 0 1 0 4.30 0a2.15 2.15 0 1 0 -4.30 0M651.0 809.2a2.15 2.15 0 1 0 4.30 0a2.15 2.15 0 1 0 -4.30 0M897.2 809.2a2.15 2.15 0 1 0 4.30 0a2.15 2.15 0 1 0 -4.30 0M1070.9 809.2a2.15 2.15 0 1 0 4.30 0a2.15 2.15 0 1 0 -4.30 0M477.2 815.0a2.15 2.15 0 1 0 4.30 0a2.15 2.15 0 1 0 -4.30 0M651.0 815.0a2.15 2.15 0 1 0 4.30 0a2.15 2.15 0 1 0 -4.30 0M897.2 815.0a2.15 2.15 0 1 0 4.30 0a2.15 2.15 0 1 0 -4.30 0M1070.9 815.0a2.15 2.15 0 1 0 4.30 0a2.15 2.15 0 1 0 -4.30 0M477.2 820.8a2.15 2.15 0 1 0 4.30 0a2.15 2.15 0 1 0 -4.30 0M651.0 820.8a2.15 2.15 0 1 0 4.30 0a2.15 2.15 0 1 0 -4.30 0M897.2 820.8a2.15 2.15 0 1 0 4.30 0a2.15 2.15 0 1 0 -4.30 0M1070.9 820.8a2.15 2.15 0 1 0 4.30 0a2.15 2.15 0 1 0 -4.30 0M477.2 826.6a2.15 2.15 0 1 0 4.30 0a2.15 2.15 0 1 0 -4.30 0M651.0 826.6a2.15 2.15 0 1 0 4.30 0a2.15 2.15 0 1 0 -4.30 0M889.0 826.6a2.15 2.15 0 1 0 4.30 0a2.15 2.15 0 1 0 -4.30 0M1070.9 826.6a2.15 2.15 0 1 0 4.30 0a2.15 2.15 0 1 0 -4.30 0M469.0 843.2a2.15 2.15 0 1 0 4.30 0a2.15 2.15 0 1 0 -4.30 0M659.2 843.2a2.15 2.15 0 1 0 4.30 0a2.15 2.15 0 1 0 -4.30 0M889.0 843.2a2.15 2.15 0 1 0 4.30 0a2.15 2.15 0 1 0 -4.30 0M1079.2 843.2a2.15 2.15 0 1 0 4.30 0a2.15 2.15 0 1 0 -4.30 0M469.0 849.0a2.15 2.15 0 1 0 4.30 0a2.15 2.15 0 1 0 -4.30 0M659.2 849.0a2.15 2.15 0 1 0 4.30 0a2.15 2.15 0 1 0 -4.30 0M889.0 849.0a2.15 2.15 0 1 0 4.30 0a2.15 2.15 0 1 0 -4.30 0M1079.2 849.0a2.15 2.15 0 1 0 4.30 0a2.15 2.15 0 1 0 -4.30 0M469.0 854.8a2.15 2.15 0 1 0 4.30 0a2.15 2.15 0 1 0 -4.30 0M659.2 854.8a2.15 2.15 0 1 0 4.30 0a2.15 2.15 0 1 0 -4.30 0M889.0 854.8a2.15 2.15 0 1 0 4.30 0a2.15 2.15 0 1 0 -4.30 0M1079.2 854.8a2.15 2.15 0 1 0 4.30 0a2.15 2.15 0 1 0 -4.30 0M469.0 860.6a2.15 2.15 0 1 0 4.30 0a2.15 2.15 0 1 0 -4.30 0M659.2 860.6a2.15 2.15 0 1 0 4.30 0a2.15 2.15 0 1 0 -4.30 0M889.0 860.6a2.15 2.15 0 1 0 4.30 0a2.15 2.15 0 1 0 -4.30 0M1079.2 860.6a2.15 2.15 0 1 0 4.30 0a2.15 2.15 0 1 0 -4.30 0M463.2 877.2a2.15 2.15 0 1 0 4.30 0a2.15 2.15 0 1 0 -4.30 0M665.0 877.2a2.15 2.15 0 1 0 4.30 0a2.15 2.15 0 1 0 -4.30 0M883.2 877.2a2.15 2.15 0 1 0 4.30 0a2.15 2.15 0 1 0 -4.30 0M1084.9 877.2a2.15 2.15 0 1 0 4.30 0a2.15 2.15 0 1 0 -4.30 0M463.2 883.0a2.15 2.15 0 1 0 4.30 0a2.15 2.15 0 1 0 -4.30 0M665.0 883.0a2.15 2.15 0 1 0 4.30 0a2.15 2.15 0 1 0 -4.30 0M883.2 883.0a2.15 2.15 0 1 0 4.30 0a2.15 2.15 0 1 0 -4.30 0M1084.9 883.0a2.15 2.15 0 1 0 4.30 0a2.15 2.15 0 1 0 -4.30 0M463.2 888.8a2.15 2.15 0 1 0 4.30 0a2.15 2.15 0 1 0 -4.30 0M665.0 888.8a2.15 2.15 0 1 0 4.30 0a2.15 2.15 0 1 0 -4.30 0M883.2 888.8a2.15 2.15 0 1 0 4.30 0a2.15 2.15 0 1 0 -4.30 0M1084.9 888.8a2.15 2.15 0 1 0 4.30 0a2.15 2.15 0 1 0 -4.30 0M463.2 894.6a2.15 2.15 0 1 0 4.30 0a2.15 2.15 0 1 0 -4.30 0M665.0 894.6a2.15 2.15 0 1 0 4.30 0a2.15 2.15 0 1 0 -4.30 0M883.2 894.6a2.15 2.15 0 1 0 4.30 0a2.15 2.15 0 1 0 -4.30 0M1084.9 894.6a2.15 2.15 0 1 0 4.30 0a2.15 2.15 0 1 0 -4.30 0M463.2 911.2a2.15 2.15 0 1 0 4.30 0a2.15 2.15 0 1 0 -4.30 0M469.0 911.2a2.15 2.15 0 1 0 4.30 0a2.15 2.15 0 1 0 -4.30 0M673.2 911.2a2.15 2.15 0 1 0 4.30 0a2.15 2.15 0 1 0 -4.30 0M679.0 911.2a2.15 2.15 0 1 0 4.30 0a2.15 2.15 0 1 0 -4.30 0M869.2 911.2a2.15 2.15 0 1 0 4.30 0a2.15 2.15 0 1 0 -4.30 0M875.0 911.2a2.15 2.15 0 1 0 4.30 0a2.15 2.15 0 1 0 -4.30 0M1093.2 911.2a2.15 2.15 0 1 0 4.30 0a2.15 2.15 0 1 0 -4.30 0M1098.9 911.2a2.15 2.15 0 1 0 4.30 0a2.15 2.15 0 1 0 -4.30 0M1289.2 911.2a2.15 2.15 0 1 0 4.30 0a2.15 2.15 0 1 0 -4.30 0M1294.9 911.2a2.15 2.15 0 1 0 4.30 0a2.15 2.15 0 1 0 -4.30 0M673.2 917.0a2.15 2.15 0 1 0 4.30 0a2.15 2.15 0 1 0 -4.30 0M875.0 917.0a2.15 2.15 0 1 0 4.30 0a2.15 2.15 0 1 0 -4.30 0M1093.2 917.0a2.15 2.15 0 1 0 4.30 0a2.15 2.15 0 1 0 -4.30 0M1294.9 917.0a2.15 2.15 0 1 0 4.30 0a2.15 2.15 0 1 0 -4.30 0M673.2 922.8a2.15 2.15 0 1 0 4.30 0a2.15 2.15 0 1 0 -4.30 0M875.0 922.8a2.15 2.15 0 1 0 4.30 0a2.15 2.15 0 1 0 -4.30 0M1093.2 922.8a2.15 2.15 0 1 0 4.30 0a2.15 2.15 0 1 0 -4.30 0M1294.9 922.8a2.15 2.15 0 1 0 4.30 0a2.15 2.15 0 1 0 -4.30 0M673.2 928.6a2.15 2.15 0 1 0 4.30 0a2.15 2.15 0 1 0 -4.30 0M875.0 928.6a2.15 2.15 0 1 0 4.30 0a2.15 2.15 0 1 0 -4.30 0M1093.2 928.6a2.15 2.15 0 1 0 4.30 0a2.15 2.15 0 1 0 -4.30 0M1294.9 928.6a2.15 2.15 0 1 0 4.30 0a2.15 2.15 0 1 0 -4.30 0M673.2 945.2a2.15 2.15 0 1 0 4.30 0a2.15 2.15 0 1 0 -4.30 0M869.2 945.2a2.15 2.15 0 1 0 4.30 0a2.15 2.15 0 1 0 -4.30 0M1098.9 945.2a2.15 2.15 0 1 0 4.30 0a2.15 2.15 0 1 0 -4.30 0M1289.2 945.2a2.15 2.15 0 1 0 4.30 0a2.15 2.15 0 1 0 -4.30 0M679.0 951.0a2.15 2.15 0 1 0 4.30 0a2.15 2.15 0 1 0 -4.30 0M869.2 951.0a2.15 2.15 0 1 0 4.30 0a2.15 2.15 0 1 0 -4.30 0M1098.9 951.0a2.15 2.15 0 1 0 4.30 0a2.15 2.15 0 1 0 -4.30 0M1289.2 951.0a2.15 2.15 0 1 0 4.30 0a2.15 2.15 0 1 0 -4.30 0M679.0 956.8a2.15 2.15 0 1 0 4.30 0a2.15 2.15 0 1 0 -4.30 0M869.2 956.8a2.15 2.15 0 1 0 4.30 0a2.15 2.15 0 1 0 -4.30 0M1098.9 956.8a2.15 2.15 0 1 0 4.30 0a2.15 2.15 0 1 0 -4.30 0M1289.2 956.8a2.15 2.15 0 1 0 4.30 0a2.15 2.15 0 1 0 -4.30 0M679.0 962.6a2.15 2.15 0 1 0 4.30 0a2.15 2.15 0 1 0 -4.30 0M869.2 962.6a2.15 2.15 0 1 0 4.30 0a2.15 2.15 0 1 0 -4.30 0M1098.9 962.6a2.15 2.15 0 1 0 4.30 0a2.15 2.15 0 1 0 -4.30 0M1289.2 962.6a2.15 2.15 0 1 0 4.30 0a2.15 2.15 0 1 0 -4.30 0M679.0 979.2a2.15 2.15 0 1 0 4.30 0a2.15 2.15 0 1 0 -4.30 0M861.0 979.2a2.15 2.15 0 1 0 4.30 0a2.15 2.15 0 1 0 -4.30 0M1107.2 979.2a2.15 2.15 0 1 0 4.30 0a2.15 2.15 0 1 0 -4.30 0M1280.9 979.2a2.15 2.15 0 1 0 4.30 0a2.15 2.15 0 1 0 -4.30 0M687.2 985.0a2.15 2.15 0 1 0 4.30 0a2.15 2.15 0 1 0 -4.30 0M861.0 985.0a2.15 2.15 0 1 0 4.30 0a2.15 2.15 0 1 0 -4.30 0M1107.2 985.0a2.15 2.15 0 1 0 4.30 0a2.15 2.15 0 1 0 -4.30 0M1280.9 985.0a2.15 2.15 0 1 0 4.30 0a2.15 2.15 0 1 0 -4.30 0M687.2 990.8a2.15 2.15 0 1 0 4.30 0a2.15 2.15 0 1 0 -4.30 0M861.0 990.8a2.15 2.15 0 1 0 4.30 0a2.15 2.15 0 1 0 -4.30 0M1107.2 990.8a2.15 2.15 0 1 0 4.30 0a2.15 2.15 0 1 0 -4.30 0M1280.9 990.8a2.15 2.15 0 1 0 4.30 0a2.15 2.15 0 1 0 -4.30 0M687.2 996.6a2.15 2.15 0 1 0 4.30 0a2.15 2.15 0 1 0 -4.30 0M861.0 996.6a2.15 2.15 0 1 0 4.30 0a2.15 2.15 0 1 0 -4.30 0M1107.2 996.6a2.15 2.15 0 1 0 4.30 0a2.15 2.15 0 1 0 -4.30 0M1280.9 996.6a2.15 2.15 0 1 0 4.30 0a2.15 2.15 0 1 0 -4.30 0M693.0 1013.2a2.15 2.15 0 1 0 4.30 0a2.15 2.15 0 1 0 -4.30 0M855.2 1013.2a2.15 2.15 0 1 0 4.30 0a2.15 2.15 0 1 0 -4.30 0M1112.9 1013.2a2.15 2.15 0 1 0 4.30 0a2.15 2.15 0 1 0 -4.30 0M1275.2 1013.2a2.15 2.15 0 1 0 4.30 0a2.15 2.15 0 1 0 -4.30 0M693.0 1019.0a2.15 2.15 0 1 0 4.30 0a2.15 2.15 0 1 0 -4.30 0M855.2 1019.0a2.15 2.15 0 1 0 4.30 0a2.15 2.15 0 1 0 -4.30 0M1112.9 1019.0a2.15 2.15 0 1 0 4.30 0a2.15 2.15 0 1 0 -4.30 0M1275.2 1019.0a2.15 2.15 0 1 0 4.30 0a2.15 2.15 0 1 0 -4.30 0M693.0 1024.8a2.15 2.15 0 1 0 4.30 0a2.15 2.15 0 1 0 -4.30 0M855.2 1024.8a2.15 2.15 0 1 0 4.30 0a2.15 2.15 0 1 0 -4.30 0M1112.9 1024.8a2.15 2.15 0 1 0 4.30 0a2.15 2.15 0 1 0 -4.30 0M1275.2 1024.8a2.15 2.15 0 1 0 4.30 0a2.15 2.15 0 1 0 -4.30 0M693.0 1030.6a2.15 2.15 0 1 0 4.30 0a2.15 2.15 0 1 0 -4.30 0M855.2 1030.6a2.15 2.15 0 1 0 4.30 0a2.15 2.15 0 1 0 -4.30 0M1112.9 1030.6a2.15 2.15 0 1 0 4.30 0a2.15 2.15 0 1 0 -4.30 0M1275.2 1030.6a2.15 2.15 0 1 0 4.30 0a2.15 2.15 0 1 0 -4.30 0M701.2 1047.2a2.15 2.15 0 1 0 4.30 0a2.15 2.15 0 1 0 -4.30 0M847.0 1047.2a2.15 2.15 0 1 0 4.30 0a2.15 2.15 0 1 0 -4.30 0M1121.2 1047.2a2.15 2.15 0 1 0 4.30 0a2.15 2.15 0 1 0 -4.30 0M1266.9 1047.2a2.15 2.15 0 1 0 4.30 0a2.15 2.15 0 1 0 -4.30 0M701.2 1053.0a2.15 2.15 0 1 0 4.30 0a2.15 2.15 0 1 0 -4.30 0M847.0 1053.0a2.15 2.15 0 1 0 4.30 0a2.15 2.15 0 1 0 -4.30 0M1121.2 1053.0a2.15 2.15 0 1 0 4.30 0a2.15 2.15 0 1 0 -4.30 0M1266.9 1053.0a2.15 2.15 0 1 0 4.30 0a2.15 2.15 0 1 0 -4.30 0M701.2 1058.8a2.15 2.15 0 1 0 4.30 0a2.15 2.15 0 1 0 -4.30 0M847.0 1058.8a2.15 2.15 0 1 0 4.30 0a2.15 2.15 0 1 0 -4.30 0M1121.2 1058.8a2.15 2.15 0 1 0 4.30 0a2.15 2.15 0 1 0 -4.30 0M1266.9 1058.8a2.15 2.15 0 1 0 4.30 0a2.15 2.15 0 1 0 -4.30 0M701.2 1064.6a2.15 2.15 0 1 0 4.30 0a2.15 2.15 0 1 0 -4.30 0M847.0 1064.6a2.15 2.15 0 1 0 4.30 0a2.15 2.15 0 1 0 -4.30 0M1121.2 1064.6a2.15 2.15 0 1 0 4.30 0a2.15 2.15 0 1 0 -4.30 0M1266.9 1064.6a2.15 2.15 0 1 0 4.30 0a2.15 2.15 0 1 0 -4.30 0M707.0 1081.2a2.15 2.15 0 1 0 4.30 0a2.15 2.15 0 1 0 -4.30 0M841.2 1081.2a2.15 2.15 0 1 0 4.30 0a2.15 2.15 0 1 0 -4.30 0M1126.9 1081.2a2.15 2.15 0 1 0 4.30 0a2.15 2.15 0 1 0 -4.30 0M1261.2 1081.2a2.15 2.15 0 1 0 4.30 0a2.15 2.15 0 1 0 -4.30 0M707.0 1087.0a2.15 2.15 0 1 0 4.30 0a2.15 2.15 0 1 0 -4.30 0M841.2 1087.0a2.15 2.15 0 1 0 4.30 0a2.15 2.15 0 1 0 -4.30 0M1126.9 1087.0a2.15 2.15 0 1 0 4.30 0a2.15 2.15 0 1 0 -4.30 0M1261.2 1087.0a2.15 2.15 0 1 0 4.30 0a2.15 2.15 0 1 0 -4.30 0M707.0 1092.8a2.15 2.15 0 1 0 4.30 0a2.15 2.15 0 1 0 -4.30 0M841.2 1092.8a2.15 2.15 0 1 0 4.30 0a2.15 2.15 0 1 0 -4.30 0M1126.9 1092.8a2.15 2.15 0 1 0 4.30 0a2.15 2.15 0 1 0 -4.30 0M1261.2 1092.8a2.15 2.15 0 1 0 4.30 0a2.15 2.15 0 1 0 -4.30 0M715.2 1098.6a2.15 2.15 0 1 0 4.30 0a2.15 2.15 0 1 0 -4.30 0M841.2 1098.6a2.15 2.15 0 1 0 4.30 0a2.15 2.15 0 1 0 -4.30 0M1126.9 1098.6a2.15 2.15 0 1 0 4.30 0a2.15 2.15 0 1 0 -4.30 0M1252.9 1098.6a2.15 2.15 0 1 0 4.30 0a2.15 2.15 0 1 0 -4.30 0M833.0 1115.2a2.15 2.15 0 1 0 4.30 0a2.15 2.15 0 1 0 -4.30 0M1252.9 1115.2a2.15 2.15 0 1 0 4.30 0a2.15 2.15 0 1 0 -4.30 0M833.0 1121.0a2.15 2.15 0 1 0 4.30 0a2.15 2.15 0 1 0 -4.30 0M1252.9 1121.0a2.15 2.15 0 1 0 4.30 0a2.15 2.15 0 1 0 -4.30 0M833.0 1126.8a2.15 2.15 0 1 0 4.30 0a2.15 2.15 0 1 0 -4.30 0M1252.9 1126.8a2.15 2.15 0 1 0 4.30 0a2.15 2.15 0 1 0 -4.30 0M827.2 1132.6a2.15 2.15 0 1 0 4.30 0a2.15 2.15 0 1 0 -4.30 0M1247.2 1132.6a2.15 2.15 0 1 0 4.30 0a2.15 2.15 0 1 0 -4.30 0M827.2 1149.2a2.15 2.15 0 1 0 4.30 0a2.15 2.15 0 1 0 -4.30 0M1247.2 1149.2a2.15 2.15 0 1 0 4.30 0a2.15 2.15 0 1 0 -4.30 0M819.0 1155.0a2.15 2.15 0 1 0 4.30 0a2.15 2.15 0 1 0 -4.30 0M1149.2 1155.0a2.15 2.15 0 1 0 4.30 0a2.15 2.15 0 1 0 -4.30 0M1247.2 1155.0a2.15 2.15 0 1 0 4.30 0a2.15 2.15 0 1 0 -4.30 0M729.2 1160.8a2.15 2.15 0 1 0 4.30 0a2.15 2.15 0 1 0 -4.30 0M819.0 1160.8a2.15 2.15 0 1 0 4.30 0a2.15 2.15 0 1 0 -4.30 0M1149.2 1160.8a2.15 2.15 0 1 0 4.30 0a2.15 2.15 0 1 0 -4.30 0M1238.9 1160.8a2.15 2.15 0 1 0 4.30 0a2.15 2.15 0 1 0 -4.30 0M729.2 1166.6a2.15 2.15 0 1 0 4.30 0a2.15 2.15 0 1 0 -4.30 0M819.0 1166.6a2.15 2.15 0 1 0 4.30 0a2.15 2.15 0 1 0 -4.30 0M1149.2 1166.6a2.15 2.15 0 1 0 4.30 0a2.15 2.15 0 1 0 -4.30 0M1238.9 1166.6a2.15 2.15 0 1 0 4.30 0a2.15 2.15 0 1 0 -4.30 0M735.0 1183.2a2.15 2.15 0 1 0 4.30 0a2.15 2.15 0 1 0 -4.30 0M813.2 1183.2a2.15 2.15 0 1 0 4.30 0a2.15 2.15 0 1 0 -4.30 0M1154.9 1183.2a2.15 2.15 0 1 0 4.30 0a2.15 2.15 0 1 0 -4.30 0M1238.9 1183.2a2.15 2.15 0 1 0 4.30 0a2.15 2.15 0 1 0 -4.30 0M735.0 1189.0a2.15 2.15 0 1 0 4.30 0a2.15 2.15 0 1 0 -4.30 0M813.2 1189.0a2.15 2.15 0 1 0 4.30 0a2.15 2.15 0 1 0 -4.30 0M1154.9 1189.0a2.15 2.15 0 1 0 4.30 0a2.15 2.15 0 1 0 -4.30 0M1233.2 1189.0a2.15 2.15 0 1 0 4.30 0a2.15 2.15 0 1 0 -4.30 0M735.0 1194.8a2.15 2.15 0 1 0 4.30 0a2.15 2.15 0 1 0 -4.30 0M805.0 1194.8a2.15 2.15 0 1 0 4.30 0a2.15 2.15 0 1 0 -4.30 0M1163.2 1194.8a2.15 2.15 0 1 0 4.30 0a2.15 2.15 0 1 0 -4.30 0M1233.2 1194.8a2.15 2.15 0 1 0 4.30 0a2.15 2.15 0 1 0 -4.30 0M743.2 1200.6a2.15 2.15 0 1 0 4.30 0a2.15 2.15 0 1 0 -4.30 0M805.0 1200.6a2.15 2.15 0 1 0 4.30 0a2.15 2.15 0 1 0 -4.30 0M1163.2 1200.6a2.15 2.15 0 1 0 4.30 0a2.15 2.15 0 1 0 -4.30 0M1224.9 1200.6a2.15 2.15 0 1 0 4.30 0a2.15 2.15 0 1 0 -4.30 0M749.0 1217.2a2.15 2.15 0 1 0 4.30 0a2.15 2.15 0 1 0 -4.30 0M799.2 1217.2a2.15 2.15 0 1 0 4.30 0a2.15 2.15 0 1 0 -4.30 0M1168.9 1217.2a2.15 2.15 0 1 0 4.30 0a2.15 2.15 0 1 0 -4.30 0M1224.9 1217.2a2.15 2.15 0 1 0 4.30 0a2.15 2.15 0 1 0 -4.30 0M757.2 1223.0a2.15 2.15 0 1 0 4.30 0a2.15 2.15 0 1 0 -4.30 0M799.2 1223.0a2.15 2.15 0 1 0 4.30 0a2.15 2.15 0 1 0 -4.30 0M1168.9 1223.0a2.15 2.15 0 1 0 4.30 0a2.15 2.15 0 1 0 -4.30 0M1219.2 1223.0a2.15 2.15 0 1 0 4.30 0a2.15 2.15 0 1 0 -4.30 0M757.2 1228.8a2.15 2.15 0 1 0 4.30 0a2.15 2.15 0 1 0 -4.30 0M791.0 1228.8a2.15 2.15 0 1 0 4.30 0a2.15 2.15 0 1 0 -4.30 0M1177.2 1228.8a2.15 2.15 0 1 0 4.30 0a2.15 2.15 0 1 0 -4.30 0M1210.9 1228.8a2.15 2.15 0 1 0 4.30 0a2.15 2.15 0 1 0 -4.30 0M763.0 1234.6a2.15 2.15 0 1 0 4.30 0a2.15 2.15 0 1 0 -4.30 0M771.2 1234.6a2.15 2.15 0 1 0 4.30 0a2.15 2.15 0 1 0 -4.30 0M777.0 1234.6a2.15 2.15 0 1 0 4.30 0a2.15 2.15 0 1 0 -4.30 0M785.2 1234.6a2.15 2.15 0 1 0 4.30 0a2.15 2.15 0 1 0 -4.30 0M1182.9 1234.6a2.15 2.15 0 1 0 4.30 0a2.15 2.15 0 1 0 -4.30 0M1191.2 1234.6a2.15 2.15 0 1 0 4.30 0a2.15 2.15 0 1 0 -4.30 0M1196.9 1234.6a2.15 2.15 0 1 0 4.30 0a2.15 2.15 0 1 0 -4.30 0M1205.2 1234.6a2.15 2.15 0 1 0 4.30 0a2.15 2.15 0 1 0 -4.30 0"/>
<path fill="#ff7dff" d="M715.2 333.2a2.15 2.15 0 1 0 4.30 0a2.15 2.15 0 1 0 -4.30 0M1135.2 333.2a2.15 2.15 0 1 0 4.30 0a2.15 2.15 0 1 0 -4.30 0M715.2 339.0a2.15 2.15 0 1 0 4.30 0a2.15 2.15 0 1 0 -4.30 0M1135.2 339.0a2.15 2.15 0 1 0 4.30 0a2.15 2.15 0 1 0 -4.30 0M715.2 344.8a2.15 2.15 0 1 0 4.30 0a2.15 2.15 0 1 0 -4.30 0M721.0 344.8a2.15 2.15 0 1 0 4.30 0a2.15 2.15 0 1 0 -4.30 0M1135.2 344.8a2.15 2.15 0 1 0 4.30 0a2.15 2.15 0 1 0 -4.30 0M1140.9 344.8a2.15 2.15 0 1 0 4.30 0a2.15 2.15 0 1 0 -4.30 0M721.0 350.6a2.15 2.15 0 1 0 4.30 0a2.15 2.15 0 1 0 -4.30 0M1140.9 350.6a2.15 2.15 0 1 0 4.30 0a2.15 2.15 0 1 0 -4.30 0M721.0 367.2a2.15 2.15 0 1 0 4.30 0a2.15 2.15 0 1 0 -4.30 0M1140.9 367.2a2.15 2.15 0 1 0 4.30 0a2.15 2.15 0 1 0 -4.30 0M715.2 373.0a2.15 2.15 0 1 0 4.30 0a2.15 2.15 0 1 0 -4.30 0M721.0 373.0a2.15 2.15 0 1 0 4.30 0a2.15 2.15 0 1 0 -4.30 0M1135.2 373.0a2.15 2.15 0 1 0 4.30 0a2.15 2.15 0 1 0 -4.30 0M1140.9 373.0a2.15 2.15 0 1 0 4.30 0a2.15 2.15 0 1 0 -4.30 0M715.2 378.8a2.15 2.15 0 1 0 4.30 0a2.15 2.15 0 1 0 -4.30 0M1135.2 378.8a2.15 2.15 0 1 0 4.30 0a2.15 2.15 0 1 0 -4.30 0M715.2 384.6a2.15 2.15 0 1 0 4.30 0a2.15 2.15 0 1 0 -4.30 0M1135.2 384.6a2.15 2.15 0 1 0 4.30 0a2.15 2.15 0 1 0 -4.30 0M505.2 639.2a2.15 2.15 0 1 0 4.30 0a2.15 2.15 0 1 0 -4.30 0M925.2 639.2a2.15 2.15 0 1 0 4.30 0a2.15 2.15 0 1 0 -4.30 0M505.2 645.0a2.15 2.15 0 1 0 4.30 0a2.15 2.15 0 1 0 -4.30 0M925.2 645.0a2.15 2.15 0 1 0 4.30 0a2.15 2.15 0 1 0 -4.30 0M511.0 650.8a2.15 2.15 0 1 0 4.30 0a2.15 2.15 0 1 0 -4.30 0M931.0 650.8a2.15 2.15 0 1 0 4.30 0a2.15 2.15 0 1 0 -4.30 0M511.0 656.6a2.15 2.15 0 1 0 4.30 0a2.15 2.15 0 1 0 -4.30 0M931.0 656.6a2.15 2.15 0 1 0 4.30 0a2.15 2.15 0 1 0 -4.30 0M511.0 673.2a2.15 2.15 0 1 0 4.30 0a2.15 2.15 0 1 0 -4.30 0M931.0 673.2a2.15 2.15 0 1 0 4.30 0a2.15 2.15 0 1 0 -4.30 0M511.0 679.0a2.15 2.15 0 1 0 4.30 0a2.15 2.15 0 1 0 -4.30 0M925.2 679.0a2.15 2.15 0 1 0 4.30 0a2.15 2.15 0 1 0 -4.30 0M505.2 684.8a2.15 2.15 0 1 0 4.30 0a2.15 2.15 0 1 0 -4.30 0M925.2 684.8a2.15 2.15 0 1 0 4.30 0a2.15 2.15 0 1 0 -4.30 0M505.2 690.6a2.15 2.15 0 1 0 4.30 0a2.15 2.15 0 1 0 -4.30 0M925.2 690.6a2.15 2.15 0 1 0 4.30 0a2.15 2.15 0 1 0 -4.30 0M715.2 1115.2a2.15 2.15 0 1 0 4.30 0a2.15 2.15 0 1 0 -4.30 0M1135.2 1115.2a2.15 2.15 0 1 0 4.30 0a2.15 2.15 0 1 0 -4.30 0M715.2 1121.0a2.15 2.15 0 1 0 4.30 0a2.15 2.15 0 1 0 -4.30 0M1135.2 1121.0a2.15 2.15 0 1 0 4.30 0a2.15 2.15 0 1 0 -4.30 0M715.2 1126.8a2.15 2.15 0 1 0 4.30 0a2.15 2.15 0 1 0 -4.30 0M721.0 1126.8a2.15 2.15 0 1 0 4.30 0a2.15 2.15 0 1 0 -4.30 0M1135.2 1126.8a2.15 2.15 0 1 0 4.30 0a2.15 2.15 0 1 0 -4.30 0M1140.9 1126.8a2.15 2.15 0 1 0 4.30 0a2.15 2.15 0 1 0 -4.30 0M721.0 1132.6a2.15 2.15 0 1 0 4.30 0a2.15 2.15 0 1 0 -4.30 0M1140.9 1132.6a2.15 2.15 0 1 0 4.30 0a2.15 2.15 0 1 0 -4.30 0M721.0 1149.2a2.15 2.15 0 1 0 4.30 0a2.15 2.15 0 1 0 -4.30 0M1140.9 1149.2a2.15 2.15 0 1 0 4.30 0a2.15 2.15 0 1 0 -4.30 0M715.2 1155.0a2.15 2.15 0 1 0 4.30 0a2.15 2.15 0 1 0 -4.30 0M721.0 1155.0a2.15 2.15 0 1 0 4.30 0a2.15 2.15 0 1 0 -4.30 0M1140.9 1155.0a2.15 2.15 0 1 0 4.30 0a2.15 2.15 0 1 0 -4.30 0M715.2 1160.8a2.15 2.15 0 1 0 4.30 0a2.15 2.15 0 1 0 -4.30 0M1135.2 1160.8a2.15 2.15 0 1 0 4.30 0a2.15 2.15 0 1 0 -4.30 0M715.2 1166.6a2.15 2.15 0 1 0 4.30 0a2.15 2.15 0 1 0 -4.30 0M1135.2 1166.6a2.15 2.15 0 1 0 4.30 0a2.15 2.15 0 1 0 -4.30 0"/>
<rect x="451.05" y="125.0" width="1.05" height="21.8" fill="#1e418c"/>
<rect x="452.10" y="125.0" width="1.75" height="21.8" fill="#d5d9d9"/>
<rect x="453.85" y="125.0" width="1.35" height="21.8" fill="#b68c5a"/>
<rect x="1305.05" y="125.0" width="1.05" height="21.8" fill="#1e418c"/>
<rect x="1306.10" y="125.0" width="1.75" height="21.8" fill="#d5d9d9"/>
<rect x="1307.85" y="125.0" width="1.35" height="21.8" fill="#b68c5a"/>
<rect x="451.05" y="159.0" width="1.05" height="21.8" fill="#1e418c"/>
<rect x="452.10" y="159.0" width="1.75" height="21.8" fill="#d5d9d9"/>
<rect x="453.85" y="159.0" width="1.35" height="21.8" fill="#b68c5a"/>
<rect x="1305.05" y="159.0" width="1.05" height="21.8" fill="#1e418c"/>
<rect x="1306.10" y="159.0" width="1.75" height="21.8" fill="#d5d9d9"/>
<rect x="1307.85" y="159.0" width="1.35" height="21.8" fill="#b68c5a"/>
<rect x="451.05" y="193.0" width="1.05" height="21.8" fill="#1e418c"/>
<rect x="452.10" y="193.0" width="1.75" height="21.8" fill="#d5d9d9"/>
<rect x="453.85" y="193.0" width="1.35" height="21.8" fill="#b68c5a"/>
<rect x="1305.05" y="193.0" width="1.05" height="21.8" fill="#1e418c"/>
<rect x="1306.10" y="193.0" width="1.75" height="21.8" fill="#d5d9d9"/>
<rect x="1307.85" y="193.0" width="1.35" height="21.8" fill="#b68c5a"/>
<rect x="451.05" y="227.0" width="1.05" height="21.8" fill="#1e418c"/>
<rect x="452.10" y="227.0" width="1.75" height="21.8" fill="#d5d9d9"/>
<rect x="453.85" y="227.0" width="1.35" height="21.8" fill="#b68c5a"/>
<rect x="1305.05" y="227.0" width="1.05" height="21.8" fill="#1e418c"/>
<rect x="1306.10" y="227.0" width="1.75" height="21.8" fill="#d5d9d9"/>
<rect x="1307.85" y="227.0" width="1.35" height="21.8" fill="#b68c5a"/>
<rect x="451.05" y="261.0" width="1.05" height="21.8" fill="#1e418c"/>
<rect x="452.10" y="261.0" width="1.75" height="21.8" fill="#d5d9d9"/>
<rect x="453.85" y="261.0" width="1.35" height="21.8" fill="#b68c5a"/>
<rect x="1305.05" y="261.0" width="1.05" height="21.8" fill="#1e418c"/>
<rect x="1306.10" y="261.0" width="1.75" height="21.8" fill="#d5d9d9"/>
<rect x="1307.85" y="261.0" width="1.35" height="21.8" fill="#b68c5a"/>
<rect x="451.05" y="295.0" width="1.05" height="21.8" fill="#1e418c"/>
<rect x="452.10" y="295.0" width="1.75" height="21.8" fill="#d5d9d9"/>
<rect x="453.85" y="295.0" width="1.35" height="21.8" fill="#b68c5a"/>
<rect x="1305.05" y="295.0" width="1.05" height="21.8" fill="#1e418c"/>
<rect x="1306.10" y="295.0" width="1.75" height="21.8" fill="#d5d9d9"/>
<rect x="1307.85" y="295.0" width="1.35" height="21.8" fill="#b68c5a"/>
<rect x="451.05" y="329.0" width="1.05" height="21.8" fill="#1e418c"/>
<rect x="452.10" y="329.0" width="1.75" height="21.8" fill="#d5d9d9"/>
<rect x="453.85" y="329.0" width="1.35" height="21.8" fill="#b68c5a"/>
<rect x="1305.05" y="329.0" width="1.05" height="21.8" fill="#1e418c"/>
<rect x="1306.10" y="329.0" width="1.75" height="21.8" fill="#d5d9d9"/>
<rect x="1307.85" y="329.0" width="1.35" height="21.8" fill="#b68c5a"/>
<rect x="451.05" y="363.0" width="1.05" height="21.8" fill="#1e418c"/>
<rect x="452.10" y="363.0" width="1.75" height="21.8" fill="#d5d9d9"/>
<rect x="453.85" y="363.0" width="1.35" height="21.8" fill="#b68c5a"/>
<rect x="1305.05" y="363.0" width="1.05" height="21.8" fill="#1e418c"/>
<rect x="1306.10" y="363.0" width="1.75" height="21.8" fill="#d5d9d9"/>
<rect x="1307.85" y="363.0" width="1.35" height="21.8" fill="#b68c5a"/>
<rect x="451.05" y="397.0" width="1.05" height="21.8" fill="#1e418c"/>
<rect x="452.10" y="397.0" width="1.75" height="21.8" fill="#d5d9d9"/>
<rect x="453.85" y="397.0" width="1.35" height="21.8" fill="#b68c5a"/>
<rect x="1305.05" y="397.0" width="1.05" height="21.8" fill="#1e418c"/>
<rect x="1306.10" y="397.0" width="1.75" height="21.8" fill="#d5d9d9"/>
<rect x="1307.85" y="397.0" width="1.35" height="21.8" fill="#b68c5a"/>
<rect x="451.05" y="431.0" width="1.05" height="21.8" fill="#1e418c"/>
<rect x="452.10" y="431.0" width="1.75" height="21.8" fill="#d5d9d9"/>
<rect x="453.85" y="431.0" width="1.35" height="21.8" fill="#b68c5a"/>
<rect x="1305.05" y="431.0" width="1.05" height="21.8" fill="#1e418c"/>
<rect x="1306.10" y="431.0" width="1.75" height="21.8" fill="#d5d9d9"/>
<rect x="1307.85" y="431.0" width="1.35" height="21.8" fill="#b68c5a"/>
<rect x="451.05" y="465.0" width="1.05" height="12.0" fill="#1e418c"/>
<rect x="452.10" y="465.0" width="1.75" height="12.0" fill="#d5d9d9"/>
<rect x="453.85" y="465.0" width="1.35" height="12.0" fill="#b68c5a"/>
<rect x="1305.05" y="465.0" width="1.05" height="12.0" fill="#1e418c"/>
<rect x="1306.10" y="465.0" width="1.75" height="12.0" fill="#d5d9d9"/>
<rect x="1307.85" y="465.0" width="1.35" height="12.0" fill="#b68c5a"/>
<rect x="451.3" y="474.0" width="857.6" height="3.0" fill="#cfcfcf"/>
<rect x="451.05" y="542.0" width="1.05" height="12.8" fill="#1e418c"/>
<rect x="452.10" y="542.0" width="1.75" height="12.8" fill="#d5d9d9"/>
<rect x="453.85" y="542.0" width="1.35" height="12.8" fill="#b68c5a"/>
<rect x="1305.05" y="542.0" width="1.05" height="12.8" fill="#1e418c"/>
<rect x="1306.10" y="542.0" width="1.75" height="12.8" fill="#d5d9d9"/>
<rect x="1307.85" y="542.0" width="1.35" height="12.8" fill="#b68c5a"/>
<rect x="451.3" y="542.0" width="857.6" height="3.0" fill="#cfcfcf"/>
<rect x="451.05" y="567.0" width="1.05" height="21.8" fill="#1e418c"/>
<rect x="452.10" y="567.0" width="1.75" height="21.8" fill="#d5d9d9"/>
<rect x="453.85" y="567.0" width="1.35" height="21.8" fill="#b68c5a"/>
<rect x="1305.05" y="567.0" width="1.05" height="21.8" fill="#1e418c"/>
<rect x="1306.10" y="567.0" width="1.75" height="21.8" fill="#d5d9d9"/>
<rect x="1307.85" y="567.0" width="1.35" height="21.8" fill="#b68c5a"/>
<rect x="451.05" y="601.0" width="1.05" height="21.8" fill="#1e418c"/>
<rect x="452.10" y="601.0" width="1.75" height="21.8" fill="#d5d9d9"/>
<rect x="453.85" y="601.0" width="1.35" height="21.8" fill="#b68c5a"/>
<rect x="1305.05" y="601.0" width="1.05" height="21.8" fill="#1e418c"/>
<rect x="1306.10" y="601.0" width="1.75" height="21.8" fill="#d5d9d9"/>
<rect x="1307.85" y="601.0" width="1.35" height="21.8" fill="#b68c5a"/>
<rect x="451.05" y="635.0" width="1.05" height="21.8" fill="#1e418c"/>
<rect x="452.10" y="635.0" width="1.75" height="21.8" fill="#d5d9d9"/>
<rect x="453.85" y="635.0" width="1.35" height="21.8" fill="#b68c5a"/>
<rect x="1305.05" y="635.0" width="1.05" height="21.8" fill="#1e418c"/>
<rect x="1306.10" y="635.0" width="1.75" height="21.8" fill="#d5d9d9"/>
<rect x="1307.85" y="635.0" width="1.35" height="21.8" fill="#b68c5a"/>
<rect x="451.05" y="669.0" width="1.05" height="21.8" fill="#1e418c"/>
<rect x="452.10" y="669.0" width="1.75" height="21.8" fill="#d5d9d9"/>
<rect x="453.85" y="669.0" width="1.35" height="21.8" fill="#b68c5a"/>
<rect x="1305.05" y="669.0" width="1.05" height="21.8" fill="#1e418c"/>
<rect x="1306.10" y="669.0" width="1.75" height="21.8" fill="#d5d9d9"/>
<rect x="1307.85" y="669.0" width="1.35" height="21.8" fill="#b68c5a"/>
<rect x="451.05" y="703.0" width="1.05" height="21.8" fill="#1e418c"/>
<rect x="452.10" y="703.0" width="1.75" height="21.8" fill="#d5d9d9"/>
<rect x="453.85" y="703.0" width="1.35" height="21.8" fill="#b68c5a"/>
<rect x="1305.05" y="703.0" width="1.05" height="21.8" fill="#1e418c"/>
<rect x="1306.10" y="703.0" width="1.75" height="21.8" fill="#d5d9d9"/>
<rect x="1307.85" y="703.0" width="1.35" height="21.8" fill="#b68c5a"/>
<rect x="451.05" y="737.0" width="1.05" height="21.8" fill="#1e418c"/>
<rect x="452.10" y="737.0" width="1.75" height="21.8" fill="#d5d9d9"/>
<rect x="453.85" y="737.0" width="1.35" height="21.8" fill="#b68c5a"/>
<rect x="1305.05" y="737.0" width="1.05" height="21.8" fill="#1e418c"/>
<rect x="1306.10" y="737.0" width="1.75" height="21.8" fill="#d5d9d9"/>
<rect x="1307.85" y="737.0" width="1.35" height="21.8" fill="#b68c5a"/>
<rect x="451.05" y="771.0" width="1.05" height="21.8" fill="#1e418c"/>
<rect x="452.10" y="771.0" width="1.75" height="21.8" fill="#d5d9d9"/>
<rect x="453.85" y="771.0" width="1.35" height="21.8" fill="#b68c5a"/>
<rect x="1305.05" y="771.0" width="1.05" height="21.8" fill="#1e418c"/>
<rect x="1306.10" y="771.0" width="1.75" height="21.8" fill="#d5d9d9"/>
<rect x="1307.85" y="771.0" width="1.35" height="21.8" fill="#b68c5a"/>
<rect x="451.05" y="805.0" width="1.05" height="21.8" fill="#1e418c"/>
<rect x="452.10" y="805.0" width="1.75" height="21.8" fill="#d5d9d9"/>
<rect x="453.85" y="805.0" width="1.35" height="21.8" fill="#b68c5a"/>
<rect x="1305.05" y="805.0" width="1.05" height="21.8" fill="#1e418c"/>
<rect x="1306.10" y="805.0" width="1.75" height="21.8" fill="#d5d9d9"/>
<rect x="1307.85" y="805.0" width="1.35" height="21.8" fill="#b68c5a"/>
<rect x="451.05" y="839.0" width="1.05" height="21.8" fill="#1e418c"/>
<rect x="452.10" y="839.0" width="1.75" height="21.8" fill="#d5d9d9"/>
<rect x="453.85" y="839.0" width="1.35" height="21.8" fill="#b68c5a"/>
<rect x="1305.05" y="839.0" width="1.05" height="21.8" fill="#1e418c"/>
<rect x="1306.10" y="839.0" width="1.75" height="21.8" fill="#d5d9d9"/>
<rect x="1307.85" y="839.0" width="1.35" height="21.8" fill="#b68c5a"/>
<rect x="451.05" y="873.0" width="1.05" height="21.8" fill="#1e418c"/>
<rect x="452.10" y="873.0" width="1.75" height="21.8" fill="#d5d9d9"/>
<rect x="453.85" y="873.0" width="1.35" height="21.8" fill="#b68c5a"/>
<rect x="1305.05" y="873.0" width="1.05" height="21.8" fill="#1e418c"/>
<rect x="1306.10" y="873.0" width="1.75" height="21.8" fill="#d5d9d9"/>
<rect x="1307.85" y="873.0" width="1.35" height="21.8" fill="#b68c5a"/>
<rect x="451.05" y="907.0" width="1.05" height="21.8" fill="#1e418c"/>
<rect x="452.10" y="907.0" width="1.75" height="21.8" fill="#d5d9d9"/>
<rect x="453.85" y="907.0" width="1.35" height="21.8" fill="#b68c5a"/>
<rect x="1305.05" y="907.0" width="1.05" height="21.8" fill="#1e418c"/>
<rect x="1306.10" y="907.0" width="1.75" height="21.8" fill="#d5d9d9"/>
<rect x="1307.85" y="907.0" width="1.35" height="21.8" fill="#b68c5a"/>
<rect x="451.05" y="941.0" width="1.05" height="21.8" fill="#1e418c"/>
<rect x="452.10" y="941.0" width="1.75" height="21.8" fill="#d5d9d9"/>
<rect x="453.85" y="941.0" width="1.35" height="21.8" fill="#b68c5a"/>
<rect x="1305.05" y="941.0" width="1.05" height="21.8" fill="#1e418c"/>
<rect x="1306.10" y="941.0" width="1.75" height="21.8" fill="#d5d9d9"/>
<rect x="1307.85" y="941.0" width="1.35" height="21.8" fill="#b68c5a"/>
<rect x="451.05" y="975.0" width="1.05" height="21.8" fill="#1e418c"/>
<rect x="452.10" y="975.0" width="1.75" height="21.8" fill="#d5d9d9"/>
<rect x="453.85" y="975.0" width="1.35" height="21.8" fill="#b68c5a"/>
<rect x="1305.05" y="975.0" width="1.05" height="21.8" fill="#1e418c"/>
<rect x="1306.10" y="975.0" width="1.75" height="21.8" fill="#d5d9d9"/>
<rect x="1307.85" y="975.0" width="1.35" height="21.8" fill="#b68c5a"/>
<rect x="451.05" y="1009.0" width="1.05" height="21.8" fill="#1e418c"/>
<rect x="452.10" y="1009.0" width="1.75" height="21.8" fill="#d5d9d9"/>
<rect x="453.85" y="1009.0" width="1.35" height="21.8" fill="#b68c5a"/>
<rect x="1305.05" y="1009.0" width="1.05" height="21.8" fill="#1e418c"/>
<rect x="1306.10" y="1009.0" width="1.75" height="21.8" fill="#d5d9d9"/>
<rect x="1307.85" y="1009.0" width="1.35" height="21.8" fill="#b68c5a"/>
<rect x="451.05" y="1043.0" width="1.05" height="21.8" fill="#1e418c"/>
<rect x="452.10" y="1043.0" width="1.75" height="21.8" fill="#d5d9d9"/>
<rect x="453.85" y="1043.0" width="1.35" height="21.8" fill="#b68c5a"/>
<rect x="1305.05" y="1043.0" width="1.05" height="21.8" fill="#1e418c"/>
<rect x="1306.10" y="1043.0" width="1.75" height="21.8" fill="#d5d9d9"/>
<rect x="1307.85" y="1043.0" width="1.35" height="21.8" fill="#b68c5a"/>
<rect x="451.05" y="1077.0" width="1.05" height="21.8" fill="#1e418c"/>
<rect x="452.10" y="1077.0" width="1.75" height="21.8" fill="#d5d9d9"/>
<rect x="453.85" y="1077.0" width="1.35" height="21.8" fill="#b68c5a"/>
<rect x="1305.05" y="1077.0" width="1.05" height="21.8" fill="#1e418c"/>
<rect x="1306.10" y="1077.0" width="1.75" height="21.8" fill="#d5d9d9"/>
<rect x="1307.85" y="1077.0" width="1.35" height="21.8" fill="#b68c5a"/>
<rect x="451.05" y="1111.0" width="1.05" height="21.8" fill="#1e418c"/>
<rect x="452.10" y="1111.0" width="1.75" height="21.8" fill="#d5d9d9"/>
<rect x="453.85" y="1111.0" width="1.35" height="21.8" fill="#b68c5a"/>
<rect x="1305.05" y="1111.0" width="1.05" height="21.8" fill="#1e418c"/>
<rect x="1306.10" y="1111.0" width="1.75" height="21.8" fill="#d5d9d9"/>
<rect x="1307.85" y="1111.0" width="1.35" height="21.8" fill="#b68c5a"/>
<rect x="451.05" y="1145.0" width="1.05" height="21.8" fill="#1e418c"/>
<rect x="452.10" y="1145.0" width="1.75" height="21.8" fill="#d5d9d9"/>
<rect x="453.85" y="1145.0" width="1.35" height="21.8" fill="#b68c5a"/>
<rect x="1305.05" y="1145.0" width="1.05" height="21.8" fill="#1e418c"/>
<rect x="1306.10" y="1145.0" width="1.75" height="21.8" fill="#d5d9d9"/>
<rect x="1307.85" y="1145.0" width="1.35" height="21.8" fill="#b68c5a"/>
<rect x="451.05" y="1179.0" width="1.05" height="21.8" fill="#1e418c"/>
<rect x="452.10" y="1179.0" width="1.75" height="21.8" fill="#d5d9d9"/>
<rect x="453.85" y="1179.0" width="1.35" height="21.8" fill="#b68c5a"/>
<rect x="1305.05" y="1179.0" width="1.05" height="21.8" fill="#1e418c"/>
<rect x="1306.10" y="1179.0" width="1.75" height="21.8" fill="#d5d9d9"/>
<rect x="1307.85" y="1179.0" width="1.35" height="21.8" fill="#b68c5a"/>
<rect x="451.05" y="1213.0" width="1.05" height="21.8" fill="#1e418c"/>
<rect x="452.10" y="1213.0" width="1.75" height="21.8" fill="#d5d9d9"/>
<rect x="453.85" y="1213.0" width="1.35" height="21.8" fill="#b68c5a"/>
<rect x="1305.05" y="1213.0" width="1.05" height="21.8" fill="#1e418c"/>
<rect x="1306.10" y="1213.0" width="1.75" height="21.8" fill="#d5d9d9"/>
<rect x="1307.85" y="1213.0" width="1.35" height="21.8" fill="#b68c5a"/>
<rect x="451.05" y="1247.0" width="1.05" height="12.0" fill="#1e418c"/>
<rect x="452.10" y="1247.0" width="1.75" height="12.0" fill="#d5d9d9"/>
<rect x="453.85" y="1247.0" width="1.35" height="12.0" fill="#b68c5a"/>
<rect x="1305.05" y="1247.0" width="1.05" height="12.0" fill="#1e418c"/>
<rect x="1306.10" y="1247.0" width="1.75" height="12.0" fill="#d5d9d9"/>
<rect x="1307.85" y="1247.0" width="1.35" height="12.0" fill="#b68c5a"/>
<rect x="451.3" y="1256.0" width="857.6" height="3.0" fill="#cfcfcf"/>
<rect x="124.0" y="1308.0" width="14.0" height="34.0" fill="#ffffff"/>
<text transform="translate(166.00 449.90) scale(1 1.090)" fill="#ffffff" stroke="#ffffff" stroke-width="0.35" class="t"> 0.9999987317275395</text>
<text transform="translate(446.00 517.90) scale(1 1.090)" fill="#ffffff" stroke="#ffffff" stroke-width="0.35" class="t">0</text>
<text transform="translate(1244.00 517.90) scale(1 1.090)" fill="#ffffff" stroke="#ffffff" stroke-width="0.35" class="t">12.56</text>
<text transform="translate(418.00 585.90) scale(1 1.090)" fill="#ffffff" stroke="#ffffff" stroke-width="0.35" class="t">1</text>
<text transform="translate(1328.00 585.90) scale(1 1.090)" fill="#6b70ff" stroke="#6b70ff" stroke-width="0.35" class="t">y_1</text>
<text transform="translate(1328.00 619.90) scale(1 1.090)" fill="#ff6b66" stroke="#ff6b66" stroke-width="0.35" class="t">y_2</text>
<text transform="translate(166.00 1231.90) scale(1 1.090)" fill="#ffffff" stroke="#ffffff" stroke-width="0.35" class="t"> 0.9996456111234525</text>
<text transform="translate(446.00 1299.90) scale(1 1.090)" fill="#ffffff" stroke="#ffffff" stroke-width="0.35" class="t">0</text>
<text transform="translate(1062.00 1299.90) scale(1 1.090)" fill="#ffffff" stroke="#ffffff" stroke-width="0.35" class="t">12.566370614359172</text>
<rect x="168.0" y="441.0" width="11.4" height="2.9" fill="#ffffff"/>
<rect x="168.0" y="1223.0" width="11.4" height="2.9" fill="#ffffff"/>
</svg>
</body></html>
